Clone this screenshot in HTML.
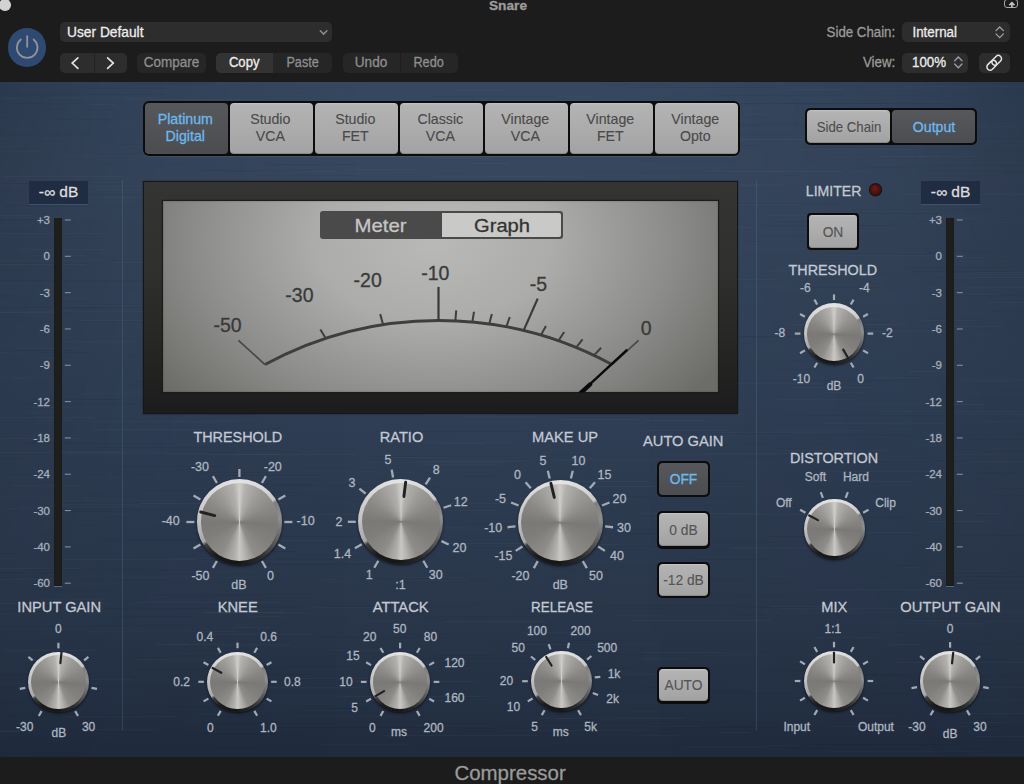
<!DOCTYPE html>
<html><head><meta charset="utf-8"><title>Compressor</title><style>
html,body{margin:0;padding:0;width:1024px;height:784px;overflow:hidden;background:#1c1c1c;font-family:"Liberation Sans", sans-serif;}
#root{position:relative;width:1024px;height:784px;overflow:hidden;}
svg{position:absolute;left:0;top:0;}
text{font-family:"Liberation Sans", sans-serif;}
.kb{position:absolute;border-radius:50%;
 background:conic-gradient(from 0deg,#e4e4e4 0deg,#d6d6d6 40deg,#c6c6c6 57deg,#7e7e7e 61deg,#8e8e8e 85deg,#606060 115deg,#2a2a2a 150deg,#161616 185deg,#1a1a1a 215deg,#3e3e3e 236deg,#a8a8a8 241deg,#c4c4c4 275deg,#dadada 320deg,#e4e4e4 360deg);
 box-shadow:0 1.5px 2.5px rgba(0,0,0,0.6);}
.kf{position:absolute;left:3.8px;top:4px;right:3.8px;bottom:4px;border-radius:50%;
 background:conic-gradient(from 0deg,#cfcdc9 0deg,#b2b0ac 10deg,#9c9a96 35deg,#8a8884 65deg,#7b7977 95deg,#81807d 125deg,#8f8d8a 155deg,#bdbbb7 174deg,#c9c7c3 180deg,#b2b0ac 188deg,#8e8c88 210deg,#7f7d7a 245deg,#7b7977 270deg,#8a8884 300deg,#9c9a96 325deg,#b2b0ac 350deg,#cfcdc9 360deg);}
.ks .kf{left:3px;top:3.3px;right:3px;bottom:3.2px;}
</style></head>
<body><div id="root">
<div style="position:absolute;left:0px;top:0px;width:1024px;height:82px;background:#1c1c1c"></div>
<div style="position:absolute;left:-0.6px;top:-0.8px;width:11.6px;height:11.600000000000001px;background:#d2d2d2;border-radius:50%"></div>
<div style="position:absolute;left:1004.2px;top:-0.6px;width:12.2px;height:7px;border:1.8px solid #a8a8a8;border-radius:3px;"></div>
<div style="position:absolute;left:7.9px;top:28.1px;width:38.6px;height:38.6px;background:#2e4a72;border-radius:50%"></div>
<div style="position:absolute;left:60px;top:22px;width:272px;height:20px;background:#2d2d2d;border-radius:5px"></div>
<div style="position:absolute;left:60px;top:52.5px;width:67px;height:20.0px;background:#2d2d2d;border-radius:5px"></div>
<div style="position:absolute;left:93.5px;top:52.5px;width:1.0px;height:20.0px;background:#222"></div>
<div style="position:absolute;left:137px;top:52.5px;width:69px;height:20.0px;background:#262626;border-radius:5px"></div>
<div style="position:absolute;left:216px;top:52.5px;width:116px;height:20.0px;background:#262626;border-radius:5px"></div>
<div style="position:absolute;left:216px;top:52.5px;width:56.5px;height:20.0px;background:#333333;border-radius:5px 0 0 5px"></div>
<div style="position:absolute;left:342.5px;top:52.5px;width:115.0px;height:20.0px;background:#262626;border-radius:5px"></div>
<div style="position:absolute;left:400px;top:52.5px;width:1px;height:20.0px;background:#1e1e1e"></div>
<div style="position:absolute;left:902px;top:22px;width:107.5px;height:20px;background:#2d2d2d;border-radius:5px"></div>
<div style="position:absolute;left:902px;top:52.5px;width:66px;height:20.0px;background:#2d2d2d;border-radius:5px"></div>
<div style="position:absolute;left:979px;top:52.5px;width:30.5px;height:20.0px;background:#2d2d2d;border-radius:5px"></div>
<div style="position:absolute;left:0px;top:82px;width:1024px;height:675px;background:linear-gradient(180deg,#36475f 0%,#37475e 13%,#2f3e54 50%,#29364a 80%,#243043 92%,#202b3d 100%)"></div>
<div style="position:absolute;left:0px;top:82px;width:1024px;height:675px;background:linear-gradient(90deg,rgba(10,15,25,0.24) 0%,rgba(10,15,25,0.10) 12%,rgba(10,15,25,0) 35%,rgba(10,15,25,0) 62%,rgba(10,15,25,0.10) 88%,rgba(10,15,25,0.24) 100%);-webkit-mask-image:linear-gradient(180deg,#000 0%,rgba(0,0,0,0.45) 45%,rgba(0,0,0,0.15) 100%)"></div>
<svg style="position:absolute;left:0;top:0;filter:blur(0.7px)" width="1024" height="784"><rect x="208" y="414" width="116" height="1" fill="#000" opacity="0.022"/><rect x="92" y="631" width="108" height="1" fill="#000" opacity="0.047"/><rect x="-24" y="302" width="37" height="1" fill="#fff" opacity="0.011"/><rect x="769" y="175" width="30" height="1" fill="#000" opacity="0.024"/><rect x="26" y="311" width="116" height="1" fill="#fff" opacity="0.014"/><rect x="172" y="653" width="89" height="1" fill="#fff" opacity="0.021"/><rect x="531" y="667" width="158" height="1" fill="#000" opacity="0.025"/><rect x="284" y="678" width="110" height="1" fill="#fff" opacity="0.024"/><rect x="22" y="660" width="67" height="1" fill="#fff" opacity="0.021"/><rect x="853" y="404" width="131" height="1" fill="#fff" opacity="0.015"/><rect x="399" y="267" width="35" height="1" fill="#000" opacity="0.036"/><rect x="819" y="434" width="88" height="1" fill="#000" opacity="0.022"/><rect x="756" y="607" width="57" height="1" fill="#000" opacity="0.025"/><rect x="763" y="583" width="25" height="1" fill="#000" opacity="0.022"/><rect x="542" y="654" width="102" height="1" fill="#000" opacity="0.038"/><rect x="834" y="676" width="32" height="1" fill="#000" opacity="0.048"/><rect x="33" y="568" width="30" height="1" fill="#000" opacity="0.029"/><rect x="812" y="674" width="87" height="1" fill="#000" opacity="0.047"/><rect x="-54" y="438" width="133" height="1" fill="#fff" opacity="0.022"/><rect x="20" y="588" width="70" height="1" fill="#000" opacity="0.024"/><rect x="714" y="336" width="115" height="1" fill="#000" opacity="0.035"/><rect x="819" y="253" width="117" height="1" fill="#000" opacity="0.047"/><rect x="470" y="523" width="121" height="1" fill="#000" opacity="0.040"/><rect x="372" y="472" width="53" height="1" fill="#fff" opacity="0.013"/><rect x="-76" y="321" width="139" height="1" fill="#000" opacity="0.025"/><rect x="-92" y="371" width="52" height="1" fill="#fff" opacity="0.017"/><rect x="552" y="662" width="47" height="1" fill="#000" opacity="0.035"/><rect x="10" y="715" width="131" height="1" fill="#000" opacity="0.043"/><rect x="703" y="655" width="116" height="1" fill="#fff" opacity="0.012"/><rect x="720" y="732" width="30" height="1" fill="#fff" opacity="0.030"/><rect x="232" y="534" width="43" height="1" fill="#fff" opacity="0.011"/><rect x="209" y="83" width="152" height="1" fill="#fff" opacity="0.017"/><rect x="44" y="109" width="68" height="1" fill="#000" opacity="0.024"/><rect x="611" y="341" width="108" height="1" fill="#fff" opacity="0.012"/><rect x="854" y="582" width="137" height="1" fill="#fff" opacity="0.012"/><rect x="601" y="187" width="82" height="1" fill="#fff" opacity="0.024"/><rect x="-53" y="611" width="67" height="1" fill="#000" opacity="0.036"/><rect x="-45" y="233" width="150" height="1" fill="#fff" opacity="0.023"/><rect x="434" y="176" width="147" height="1" fill="#fff" opacity="0.013"/><rect x="990" y="311" width="153" height="1" fill="#000" opacity="0.030"/><rect x="299" y="311" width="76" height="1" fill="#000" opacity="0.042"/><rect x="309" y="315" width="147" height="1" fill="#fff" opacity="0.025"/><rect x="472" y="111" width="135" height="1" fill="#fff" opacity="0.024"/><rect x="815" y="435" width="104" height="1" fill="#000" opacity="0.031"/><rect x="109" y="308" width="73" height="1" fill="#fff" opacity="0.017"/><rect x="-97" y="577" width="137" height="1" fill="#000" opacity="0.030"/><rect x="73" y="741" width="45" height="1" fill="#000" opacity="0.043"/><rect x="879" y="287" width="60" height="1" fill="#fff" opacity="0.023"/><rect x="710" y="171" width="133" height="1" fill="#fff" opacity="0.029"/><rect x="248" y="245" width="47" height="1" fill="#fff" opacity="0.022"/><rect x="199" y="559" width="136" height="1" fill="#000" opacity="0.031"/><rect x="168" y="644" width="20" height="1" fill="#fff" opacity="0.029"/><rect x="110" y="748" width="149" height="1" fill="#000" opacity="0.024"/><rect x="332" y="282" width="22" height="1" fill="#fff" opacity="0.016"/><rect x="567" y="329" width="81" height="1" fill="#000" opacity="0.045"/><rect x="624" y="145" width="132" height="1" fill="#000" opacity="0.044"/><rect x="761" y="612" width="143" height="1" fill="#fff" opacity="0.013"/><rect x="-62" y="605" width="127" height="1" fill="#000" opacity="0.038"/><rect x="252" y="236" width="51" height="1" fill="#fff" opacity="0.025"/><rect x="26" y="652" width="98" height="1" fill="#000" opacity="0.036"/><rect x="117" y="577" width="158" height="1" fill="#fff" opacity="0.014"/><rect x="100" y="126" width="144" height="1" fill="#fff" opacity="0.011"/><rect x="807" y="147" width="98" height="1" fill="#000" opacity="0.035"/><rect x="308" y="607" width="85" height="1" fill="#fff" opacity="0.021"/><rect x="939" y="572" width="78" height="1" fill="#000" opacity="0.046"/><rect x="314" y="348" width="129" height="1" fill="#fff" opacity="0.012"/><rect x="547" y="535" width="33" height="1" fill="#000" opacity="0.033"/><rect x="520" y="300" width="46" height="1" fill="#000" opacity="0.025"/><rect x="649" y="741" width="51" height="1" fill="#fff" opacity="0.013"/><rect x="349" y="561" width="39" height="1" fill="#fff" opacity="0.020"/><rect x="230" y="312" width="125" height="1" fill="#000" opacity="0.032"/><rect x="300" y="514" width="106" height="1" fill="#fff" opacity="0.024"/><rect x="592" y="102" width="156" height="1" fill="#fff" opacity="0.024"/><rect x="578" y="476" width="147" height="1" fill="#000" opacity="0.035"/><rect x="131" y="148" width="73" height="1" fill="#000" opacity="0.023"/><rect x="456" y="354" width="25" height="1" fill="#000" opacity="0.025"/><rect x="764" y="215" width="81" height="1" fill="#fff" opacity="0.021"/><rect x="912" y="610" width="98" height="1" fill="#fff" opacity="0.011"/><rect x="771" y="270" width="33" height="1" fill="#fff" opacity="0.010"/><rect x="433" y="173" width="36" height="1" fill="#000" opacity="0.027"/><rect x="149" y="353" width="131" height="1" fill="#fff" opacity="0.030"/><rect x="448" y="510" width="48" height="1" fill="#fff" opacity="0.024"/><rect x="230" y="195" width="82" height="1" fill="#fff" opacity="0.014"/><rect x="524" y="402" width="150" height="1" fill="#000" opacity="0.029"/><rect x="264" y="595" width="84" height="1" fill="#fff" opacity="0.010"/><rect x="-25" y="339" width="18" height="1" fill="#fff" opacity="0.020"/><rect x="953" y="277" width="136" height="1" fill="#fff" opacity="0.019"/><rect x="785" y="748" width="141" height="1" fill="#000" opacity="0.047"/><rect x="530" y="601" width="70" height="1" fill="#000" opacity="0.030"/><rect x="186" y="734" width="118" height="1" fill="#000" opacity="0.049"/><rect x="-71" y="215" width="33" height="1" fill="#000" opacity="0.046"/><rect x="234" y="524" width="29" height="1" fill="#fff" opacity="0.027"/><rect x="477" y="601" width="77" height="1" fill="#000" opacity="0.021"/><rect x="222" y="272" width="83" height="1" fill="#fff" opacity="0.015"/><rect x="562" y="419" width="77" height="1" fill="#fff" opacity="0.028"/><rect x="630" y="306" width="61" height="1" fill="#fff" opacity="0.018"/><rect x="471" y="569" width="143" height="1" fill="#000" opacity="0.027"/><rect x="86" y="88" width="82" height="1" fill="#000" opacity="0.024"/><rect x="-15" y="683" width="115" height="1" fill="#fff" opacity="0.016"/><rect x="73" y="321" width="150" height="1" fill="#000" opacity="0.025"/><rect x="697" y="693" width="98" height="1" fill="#000" opacity="0.035"/><rect x="196" y="373" width="26" height="1" fill="#000" opacity="0.041"/><rect x="779" y="608" width="144" height="1" fill="#fff" opacity="0.020"/><rect x="-68" y="599" width="73" height="1" fill="#fff" opacity="0.011"/><rect x="638" y="735" width="41" height="1" fill="#fff" opacity="0.019"/><rect x="-62" y="134" width="151" height="1" fill="#000" opacity="0.035"/><rect x="835" y="86" width="32" height="1" fill="#000" opacity="0.035"/><rect x="88" y="631" width="149" height="1" fill="#fff" opacity="0.025"/><rect x="52" y="341" width="82" height="1" fill="#fff" opacity="0.025"/><rect x="842" y="319" width="141" height="1" fill="#000" opacity="0.022"/><rect x="-5" y="377" width="65" height="1" fill="#fff" opacity="0.013"/><rect x="523" y="343" width="160" height="1" fill="#fff" opacity="0.020"/><rect x="450" y="580" width="40" height="1" fill="#000" opacity="0.040"/><rect x="957" y="380" width="88" height="1" fill="#fff" opacity="0.019"/><rect x="308" y="204" width="94" height="1" fill="#000" opacity="0.048"/><rect x="493" y="100" width="132" height="1" fill="#fff" opacity="0.020"/><rect x="450" y="543" width="114" height="1" fill="#fff" opacity="0.029"/><rect x="52" y="298" width="38" height="1" fill="#fff" opacity="0.020"/><rect x="171" y="451" width="145" height="1" fill="#fff" opacity="0.012"/><rect x="373" y="456" width="142" height="1" fill="#000" opacity="0.035"/><rect x="225" y="108" width="15" height="1" fill="#000" opacity="0.040"/><rect x="518" y="498" width="51" height="1" fill="#fff" opacity="0.018"/><rect x="578" y="206" width="15" height="1" fill="#fff" opacity="0.017"/><rect x="145" y="490" width="65" height="1" fill="#000" opacity="0.047"/><rect x="418" y="379" width="110" height="1" fill="#fff" opacity="0.018"/><rect x="56" y="686" width="107" height="1" fill="#000" opacity="0.043"/><rect x="474" y="132" width="41" height="1" fill="#fff" opacity="0.023"/><rect x="204" y="733" width="78" height="1" fill="#000" opacity="0.033"/><rect x="288" y="406" width="110" height="1" fill="#000" opacity="0.033"/><rect x="719" y="112" width="156" height="1" fill="#000" opacity="0.042"/><rect x="741" y="133" width="130" height="1" fill="#000" opacity="0.024"/><rect x="894" y="376" width="27" height="1" fill="#000" opacity="0.037"/><rect x="867" y="257" width="121" height="1" fill="#fff" opacity="0.016"/><rect x="432" y="751" width="118" height="1" fill="#000" opacity="0.029"/><rect x="707" y="653" width="45" height="1" fill="#fff" opacity="0.013"/><rect x="925" y="295" width="142" height="1" fill="#000" opacity="0.034"/><rect x="821" y="423" width="124" height="1" fill="#fff" opacity="0.014"/><rect x="257" y="175" width="102" height="1" fill="#000" opacity="0.030"/><rect x="429" y="460" width="160" height="1" fill="#fff" opacity="0.010"/><rect x="684" y="505" width="120" height="1" fill="#000" opacity="0.026"/><rect x="592" y="359" width="30" height="1" fill="#fff" opacity="0.021"/><rect x="157" y="451" width="143" height="1" fill="#000" opacity="0.044"/><rect x="89" y="304" width="84" height="1" fill="#000" opacity="0.032"/><rect x="813" y="744" width="125" height="1" fill="#000" opacity="0.045"/><rect x="160" y="105" width="23" height="1" fill="#fff" opacity="0.025"/><rect x="903" y="567" width="15" height="1" fill="#fff" opacity="0.029"/><rect x="858" y="623" width="129" height="1" fill="#fff" opacity="0.012"/><rect x="211" y="241" width="148" height="1" fill="#000" opacity="0.023"/><rect x="836" y="745" width="36" height="1" fill="#000" opacity="0.021"/><rect x="376" y="211" width="160" height="1" fill="#000" opacity="0.039"/><rect x="162" y="394" width="79" height="1" fill="#000" opacity="0.033"/><rect x="103" y="197" width="33" height="1" fill="#fff" opacity="0.029"/><rect x="694" y="279" width="81" height="1" fill="#fff" opacity="0.022"/><rect x="1000" y="93" width="92" height="1" fill="#000" opacity="0.028"/><rect x="396" y="406" width="136" height="1" fill="#000" opacity="0.036"/><rect x="743" y="112" width="93" height="1" fill="#fff" opacity="0.014"/><rect x="760" y="745" width="35" height="1" fill="#fff" opacity="0.023"/><rect x="364" y="462" width="141" height="1" fill="#fff" opacity="0.017"/><rect x="642" y="513" width="116" height="1" fill="#fff" opacity="0.026"/><rect x="38" y="599" width="67" height="1" fill="#fff" opacity="0.014"/><rect x="372" y="281" width="134" height="1" fill="#fff" opacity="0.025"/><rect x="123" y="385" width="141" height="1" fill="#000" opacity="0.047"/><rect x="754" y="579" width="29" height="1" fill="#000" opacity="0.024"/><rect x="11" y="485" width="69" height="1" fill="#fff" opacity="0.022"/><rect x="6" y="508" width="30" height="1" fill="#fff" opacity="0.019"/><rect x="131" y="404" width="35" height="1" fill="#000" opacity="0.030"/><rect x="974" y="272" width="134" height="1" fill="#fff" opacity="0.023"/><rect x="665" y="470" width="99" height="1" fill="#fff" opacity="0.012"/><rect x="473" y="163" width="35" height="1" fill="#fff" opacity="0.029"/><rect x="324" y="209" width="112" height="1" fill="#fff" opacity="0.026"/><rect x="79" y="525" width="27" height="1" fill="#000" opacity="0.026"/><rect x="814" y="637" width="64" height="1" fill="#fff" opacity="0.025"/><rect x="-38" y="568" width="120" height="1" fill="#fff" opacity="0.023"/><rect x="-17" y="497" width="111" height="1" fill="#fff" opacity="0.011"/><rect x="426" y="146" width="64" height="1" fill="#000" opacity="0.047"/><rect x="643" y="430" width="84" height="1" fill="#fff" opacity="0.029"/><rect x="436" y="127" width="96" height="1" fill="#000" opacity="0.029"/><rect x="33" y="692" width="21" height="1" fill="#000" opacity="0.023"/><rect x="691" y="559" width="79" height="1" fill="#000" opacity="0.044"/><rect x="916" y="218" width="61" height="1" fill="#fff" opacity="0.029"/><rect x="209" y="393" width="75" height="1" fill="#fff" opacity="0.016"/><rect x="61" y="453" width="146" height="1" fill="#fff" opacity="0.025"/><rect x="735" y="336" width="31" height="1" fill="#000" opacity="0.034"/><rect x="567" y="640" width="56" height="1" fill="#000" opacity="0.047"/><rect x="442" y="156" width="36" height="1" fill="#fff" opacity="0.018"/><rect x="254" y="540" width="74" height="1" fill="#fff" opacity="0.019"/><rect x="148" y="323" width="90" height="1" fill="#fff" opacity="0.021"/><rect x="420" y="464" width="81" height="1" fill="#fff" opacity="0.015"/><rect x="382" y="334" width="54" height="1" fill="#fff" opacity="0.028"/><rect x="568" y="275" width="31" height="1" fill="#fff" opacity="0.030"/><rect x="977" y="602" width="74" height="1" fill="#000" opacity="0.023"/><rect x="-25" y="558" width="41" height="1" fill="#fff" opacity="0.028"/><rect x="818" y="319" width="110" height="1" fill="#fff" opacity="0.016"/><rect x="3" y="205" width="63" height="1" fill="#000" opacity="0.045"/><rect x="53" y="281" width="110" height="1" fill="#000" opacity="0.025"/><rect x="432" y="700" width="16" height="1" fill="#fff" opacity="0.022"/><rect x="616" y="717" width="70" height="1" fill="#fff" opacity="0.017"/><rect x="317" y="128" width="80" height="1" fill="#fff" opacity="0.025"/><rect x="-77" y="291" width="98" height="1" fill="#fff" opacity="0.017"/><rect x="539" y="718" width="34" height="1" fill="#fff" opacity="0.026"/><rect x="890" y="644" width="31" height="1" fill="#fff" opacity="0.026"/><rect x="216" y="646" width="151" height="1" fill="#fff" opacity="0.013"/><rect x="739" y="360" width="87" height="1" fill="#000" opacity="0.033"/><rect x="539" y="135" width="160" height="1" fill="#000" opacity="0.032"/><rect x="645" y="101" width="65" height="1" fill="#fff" opacity="0.018"/><rect x="789" y="89" width="55" height="1" fill="#fff" opacity="0.026"/><rect x="646" y="498" width="132" height="1" fill="#000" opacity="0.024"/><rect x="191" y="135" width="116" height="1" fill="#fff" opacity="0.022"/><rect x="933" y="462" width="58" height="1" fill="#fff" opacity="0.016"/><rect x="251" y="616" width="32" height="1" fill="#fff" opacity="0.020"/><rect x="517" y="285" width="47" height="1" fill="#000" opacity="0.021"/><rect x="544" y="577" width="28" height="1" fill="#000" opacity="0.039"/><rect x="228" y="171" width="71" height="1" fill="#000" opacity="0.038"/><rect x="868" y="283" width="61" height="1" fill="#000" opacity="0.021"/><rect x="220" y="613" width="113" height="1" fill="#fff" opacity="0.013"/><rect x="-16" y="280" width="158" height="1" fill="#000" opacity="0.040"/><rect x="141" y="414" width="114" height="1" fill="#000" opacity="0.037"/><rect x="527" y="725" width="122" height="1" fill="#fff" opacity="0.015"/><rect x="652" y="481" width="129" height="1" fill="#000" opacity="0.025"/><rect x="902" y="86" width="134" height="1" fill="#fff" opacity="0.025"/><rect x="267" y="552" width="136" height="1" fill="#fff" opacity="0.011"/><rect x="781" y="450" width="108" height="1" fill="#fff" opacity="0.019"/><rect x="-17" y="605" width="25" height="1" fill="#000" opacity="0.022"/><rect x="947" y="404" width="35" height="1" fill="#fff" opacity="0.020"/><rect x="178" y="469" width="21" height="1" fill="#000" opacity="0.050"/><rect x="296" y="195" width="48" height="1" fill="#000" opacity="0.035"/><rect x="352" y="252" width="31" height="1" fill="#000" opacity="0.038"/><rect x="225" y="341" width="97" height="1" fill="#000" opacity="0.028"/><rect x="194" y="550" width="80" height="1" fill="#000" opacity="0.048"/><rect x="438" y="296" width="144" height="1" fill="#fff" opacity="0.017"/><rect x="272" y="286" width="118" height="1" fill="#fff" opacity="0.029"/><rect x="671" y="418" width="58" height="1" fill="#000" opacity="0.028"/><rect x="-1" y="626" width="107" height="1" fill="#000" opacity="0.034"/><rect x="114" y="616" width="79" height="1" fill="#000" opacity="0.039"/><rect x="660" y="486" width="82" height="1" fill="#fff" opacity="0.017"/><rect x="637" y="232" width="99" height="1" fill="#000" opacity="0.033"/><rect x="-2" y="263" width="90" height="1" fill="#000" opacity="0.028"/><rect x="540" y="737" width="15" height="1" fill="#000" opacity="0.027"/><rect x="785" y="380" width="121" height="1" fill="#000" opacity="0.047"/><rect x="900" y="218" width="73" height="1" fill="#000" opacity="0.021"/><rect x="-95" y="138" width="160" height="1" fill="#fff" opacity="0.012"/><rect x="993" y="448" width="72" height="1" fill="#fff" opacity="0.016"/><rect x="318" y="219" width="108" height="1" fill="#000" opacity="0.034"/><rect x="-72" y="220" width="77" height="1" fill="#000" opacity="0.034"/><rect x="196" y="148" width="84" height="1" fill="#fff" opacity="0.015"/><rect x="14" y="94" width="158" height="1" fill="#000" opacity="0.038"/><rect x="808" y="675" width="147" height="1" fill="#000" opacity="0.027"/><rect x="-10" y="83" width="30" height="1" fill="#000" opacity="0.032"/><rect x="226" y="326" width="29" height="1" fill="#000" opacity="0.023"/><rect x="303" y="710" width="51" height="1" fill="#fff" opacity="0.020"/><rect x="938" y="741" width="121" height="1" fill="#000" opacity="0.025"/><rect x="30" y="399" width="91" height="1" fill="#000" opacity="0.050"/><rect x="-87" y="572" width="111" height="1" fill="#000" opacity="0.042"/><rect x="64" y="559" width="130" height="1" fill="#fff" opacity="0.030"/><rect x="375" y="350" width="24" height="1" fill="#fff" opacity="0.028"/><rect x="7" y="352" width="83" height="1" fill="#000" opacity="0.040"/><rect x="443" y="618" width="90" height="1" fill="#000" opacity="0.049"/><rect x="74" y="305" width="144" height="1" fill="#fff" opacity="0.015"/><rect x="315" y="324" width="55" height="1" fill="#000" opacity="0.030"/><rect x="572" y="481" width="76" height="1" fill="#fff" opacity="0.027"/><rect x="861" y="632" width="135" height="1" fill="#000" opacity="0.041"/><rect x="795" y="110" width="74" height="1" fill="#000" opacity="0.029"/><rect x="701" y="300" width="34" height="1" fill="#000" opacity="0.025"/><rect x="-45" y="116" width="43" height="1" fill="#fff" opacity="0.029"/><rect x="190" y="436" width="22" height="1" fill="#fff" opacity="0.013"/><rect x="-13" y="741" width="32" height="1" fill="#000" opacity="0.022"/><rect x="644" y="687" width="66" height="1" fill="#000" opacity="0.045"/><rect x="686" y="150" width="42" height="1" fill="#fff" opacity="0.014"/><rect x="-30" y="117" width="37" height="1" fill="#000" opacity="0.039"/><rect x="877" y="377" width="40" height="1" fill="#fff" opacity="0.026"/><rect x="319" y="744" width="90" height="1" fill="#fff" opacity="0.018"/><rect x="618" y="104" width="80" height="1" fill="#000" opacity="0.021"/><rect x="557" y="459" width="143" height="1" fill="#fff" opacity="0.016"/><rect x="745" y="114" width="22" height="1" fill="#fff" opacity="0.025"/><rect x="860" y="438" width="27" height="1" fill="#000" opacity="0.026"/><rect x="488" y="176" width="58" height="1" fill="#fff" opacity="0.020"/><rect x="10" y="378" width="16" height="1" fill="#fff" opacity="0.012"/><rect x="912" y="271" width="103" height="1" fill="#000" opacity="0.035"/><rect x="225" y="674" width="87" height="1" fill="#000" opacity="0.048"/><rect x="920" y="320" width="57" height="1" fill="#fff" opacity="0.023"/><rect x="904" y="165" width="158" height="1" fill="#000" opacity="0.039"/><rect x="94" y="447" width="117" height="1" fill="#000" opacity="0.047"/><rect x="764" y="171" width="21" height="1" fill="#fff" opacity="0.016"/><rect x="926" y="521" width="58" height="1" fill="#fff" opacity="0.028"/><rect x="843" y="322" width="47" height="1" fill="#000" opacity="0.043"/><rect x="-31" y="702" width="104" height="1" fill="#000" opacity="0.036"/><rect x="562" y="544" width="58" height="1" fill="#fff" opacity="0.024"/><rect x="373" y="346" width="47" height="1" fill="#fff" opacity="0.023"/><rect x="939" y="326" width="64" height="1" fill="#fff" opacity="0.025"/><rect x="216" y="715" width="54" height="1" fill="#000" opacity="0.042"/><rect x="969" y="700" width="104" height="1" fill="#fff" opacity="0.017"/><rect x="429" y="276" width="41" height="1" fill="#fff" opacity="0.023"/><rect x="686" y="283" width="53" height="1" fill="#000" opacity="0.044"/><rect x="790" y="387" width="85" height="1" fill="#fff" opacity="0.023"/><rect x="475" y="192" width="67" height="1" fill="#000" opacity="0.034"/><rect x="717" y="95" width="126" height="1" fill="#000" opacity="0.035"/><rect x="506" y="730" width="133" height="1" fill="#fff" opacity="0.015"/><rect x="-89" y="497" width="77" height="1" fill="#000" opacity="0.033"/><rect x="762" y="670" width="73" height="1" fill="#000" opacity="0.040"/><rect x="368" y="740" width="61" height="1" fill="#000" opacity="0.034"/><rect x="432" y="403" width="40" height="1" fill="#000" opacity="0.027"/><rect x="220" y="492" width="79" height="1" fill="#000" opacity="0.034"/><rect x="738" y="103" width="147" height="1" fill="#000" opacity="0.048"/><rect x="571" y="270" width="17" height="1" fill="#fff" opacity="0.020"/><rect x="-22" y="191" width="79" height="1" fill="#000" opacity="0.025"/><rect x="963" y="287" width="104" height="1" fill="#fff" opacity="0.021"/><rect x="319" y="637" width="136" height="1" fill="#000" opacity="0.039"/><rect x="968" y="461" width="102" height="1" fill="#fff" opacity="0.029"/><rect x="276" y="298" width="115" height="1" fill="#000" opacity="0.048"/><rect x="628" y="711" width="29" height="1" fill="#fff" opacity="0.018"/><rect x="-73" y="145" width="34" height="1" fill="#fff" opacity="0.018"/><rect x="443" y="443" width="42" height="1" fill="#fff" opacity="0.025"/><rect x="348" y="622" width="115" height="1" fill="#fff" opacity="0.013"/><rect x="295" y="153" width="135" height="1" fill="#000" opacity="0.042"/><rect x="623" y="232" width="120" height="1" fill="#fff" opacity="0.016"/><rect x="156" y="644" width="135" height="1" fill="#fff" opacity="0.027"/><rect x="670" y="356" width="79" height="1" fill="#000" opacity="0.040"/><rect x="-95" y="576" width="86" height="1" fill="#fff" opacity="0.023"/><rect x="882" y="411" width="139" height="1" fill="#fff" opacity="0.023"/><rect x="212" y="454" width="92" height="1" fill="#000" opacity="0.022"/><rect x="564" y="661" width="50" height="1" fill="#000" opacity="0.030"/><rect x="-70" y="679" width="17" height="1" fill="#fff" opacity="0.011"/><rect x="412" y="383" width="40" height="1" fill="#000" opacity="0.046"/><rect x="825" y="273" width="103" height="1" fill="#000" opacity="0.026"/><rect x="994" y="495" width="57" height="1" fill="#000" opacity="0.041"/><rect x="508" y="175" width="65" height="1" fill="#fff" opacity="0.014"/><rect x="798" y="163" width="44" height="1" fill="#000" opacity="0.028"/><rect x="185" y="322" width="136" height="1" fill="#fff" opacity="0.011"/><rect x="195" y="561" width="140" height="1" fill="#fff" opacity="0.013"/><rect x="-87" y="696" width="56" height="1" fill="#000" opacity="0.034"/><rect x="919" y="659" width="90" height="1" fill="#000" opacity="0.031"/><rect x="54" y="511" width="61" height="1" fill="#000" opacity="0.039"/><rect x="-58" y="112" width="26" height="1" fill="#000" opacity="0.048"/><rect x="92" y="421" width="145" height="1" fill="#fff" opacity="0.025"/><rect x="-31" y="230" width="69" height="1" fill="#000" opacity="0.039"/><rect x="93" y="429" width="108" height="1" fill="#fff" opacity="0.026"/><rect x="331" y="650" width="87" height="1" fill="#fff" opacity="0.018"/><rect x="7" y="650" width="89" height="1" fill="#fff" opacity="0.027"/><rect x="583" y="496" width="143" height="1" fill="#000" opacity="0.046"/><rect x="316" y="436" width="141" height="1" fill="#000" opacity="0.030"/><rect x="512" y="407" width="47" height="1" fill="#000" opacity="0.039"/><rect x="716" y="124" width="156" height="1" fill="#000" opacity="0.036"/><rect x="716" y="133" width="91" height="1" fill="#fff" opacity="0.011"/><rect x="23" y="569" width="143" height="1" fill="#000" opacity="0.038"/><rect x="201" y="714" width="36" height="1" fill="#fff" opacity="0.023"/><rect x="256" y="551" width="40" height="1" fill="#000" opacity="0.046"/><rect x="106" y="514" width="18" height="1" fill="#fff" opacity="0.026"/><rect x="428" y="399" width="92" height="1" fill="#fff" opacity="0.011"/><rect x="782" y="103" width="159" height="1" fill="#000" opacity="0.048"/><rect x="919" y="138" width="160" height="1" fill="#000" opacity="0.045"/><rect x="728" y="514" width="129" height="1" fill="#fff" opacity="0.024"/><rect x="218" y="691" width="136" height="1" fill="#000" opacity="0.036"/><rect x="867" y="167" width="69" height="1" fill="#000" opacity="0.039"/><rect x="-91" y="520" width="17" height="1" fill="#000" opacity="0.024"/><rect x="346" y="173" width="46" height="1" fill="#fff" opacity="0.010"/><rect x="396" y="665" width="130" height="1" fill="#000" opacity="0.026"/><rect x="649" y="134" width="52" height="1" fill="#000" opacity="0.023"/><rect x="920" y="726" width="132" height="1" fill="#000" opacity="0.047"/><rect x="-35" y="136" width="17" height="1" fill="#fff" opacity="0.028"/><rect x="63" y="716" width="114" height="1" fill="#fff" opacity="0.025"/><rect x="896" y="252" width="30" height="1" fill="#fff" opacity="0.029"/><rect x="862" y="532" width="57" height="1" fill="#fff" opacity="0.026"/><rect x="235" y="454" width="121" height="1" fill="#fff" opacity="0.026"/><rect x="457" y="546" width="160" height="1" fill="#fff" opacity="0.016"/><rect x="580" y="719" width="18" height="1" fill="#000" opacity="0.038"/><rect x="777" y="399" width="78" height="1" fill="#fff" opacity="0.024"/><rect x="379" y="699" width="130" height="1" fill="#fff" opacity="0.010"/><rect x="448" y="352" width="123" height="1" fill="#fff" opacity="0.028"/><rect x="490" y="126" width="51" height="1" fill="#000" opacity="0.046"/><rect x="201" y="668" width="85" height="1" fill="#000" opacity="0.044"/><rect x="923" y="643" width="103" height="1" fill="#000" opacity="0.036"/><rect x="681" y="579" width="66" height="1" fill="#000" opacity="0.042"/><rect x="533" y="322" width="29" height="1" fill="#000" opacity="0.034"/><rect x="421" y="294" width="17" height="1" fill="#000" opacity="0.034"/><rect x="998" y="172" width="105" height="1" fill="#000" opacity="0.027"/><rect x="967" y="676" width="81" height="1" fill="#000" opacity="0.036"/><rect x="936" y="571" width="66" height="1" fill="#fff" opacity="0.014"/><rect x="493" y="268" width="107" height="1" fill="#000" opacity="0.031"/><rect x="205" y="612" width="78" height="1" fill="#fff" opacity="0.030"/><rect x="117" y="466" width="110" height="1" fill="#000" opacity="0.044"/><rect x="546" y="242" width="22" height="1" fill="#fff" opacity="0.020"/><rect x="92" y="104" width="23" height="1" fill="#fff" opacity="0.027"/><rect x="895" y="662" width="160" height="1" fill="#fff" opacity="0.029"/><rect x="772" y="369" width="39" height="1" fill="#000" opacity="0.043"/><rect x="168" y="706" width="80" height="1" fill="#000" opacity="0.030"/><rect x="674" y="268" width="36" height="1" fill="#fff" opacity="0.011"/><rect x="838" y="461" width="139" height="1" fill="#000" opacity="0.047"/><rect x="713" y="148" width="45" height="1" fill="#000" opacity="0.023"/><rect x="377" y="409" width="37" height="1" fill="#000" opacity="0.040"/><rect x="274" y="485" width="129" height="1" fill="#000" opacity="0.031"/><rect x="354" y="323" width="59" height="1" fill="#fff" opacity="0.015"/><rect x="21" y="443" width="156" height="1" fill="#000" opacity="0.045"/><rect x="428" y="131" width="146" height="1" fill="#000" opacity="0.039"/><rect x="14" y="578" width="40" height="1" fill="#fff" opacity="0.025"/><rect x="511" y="286" width="127" height="1" fill="#000" opacity="0.023"/><rect x="661" y="414" width="80" height="1" fill="#fff" opacity="0.017"/><rect x="245" y="471" width="127" height="1" fill="#fff" opacity="0.013"/><rect x="858" y="95" width="64" height="1" fill="#000" opacity="0.025"/><rect x="59" y="308" width="110" height="1" fill="#000" opacity="0.024"/><rect x="98" y="540" width="113" height="1" fill="#000" opacity="0.039"/><rect x="595" y="546" width="97" height="1" fill="#000" opacity="0.034"/><rect x="649" y="726" width="51" height="1" fill="#fff" opacity="0.025"/><rect x="824" y="267" width="156" height="1" fill="#000" opacity="0.033"/><rect x="445" y="235" width="122" height="1" fill="#fff" opacity="0.013"/><rect x="507" y="360" width="100" height="1" fill="#000" opacity="0.028"/><rect x="551" y="194" width="131" height="1" fill="#000" opacity="0.023"/><rect x="16" y="608" width="69" height="1" fill="#000" opacity="0.045"/><rect x="427" y="205" width="66" height="1" fill="#000" opacity="0.033"/><rect x="388" y="350" width="75" height="1" fill="#fff" opacity="0.016"/><rect x="17" y="249" width="90" height="1" fill="#fff" opacity="0.023"/><rect x="939" y="535" width="102" height="1" fill="#000" opacity="0.033"/><rect x="486" y="622" width="62" height="1" fill="#fff" opacity="0.011"/><rect x="347" y="501" width="85" height="1" fill="#000" opacity="0.024"/><rect x="968" y="267" width="73" height="1" fill="#000" opacity="0.026"/><rect x="79" y="164" width="141" height="1" fill="#000" opacity="0.025"/><rect x="293" y="223" width="93" height="1" fill="#fff" opacity="0.011"/><rect x="735" y="615" width="29" height="1" fill="#000" opacity="0.030"/><rect x="909" y="371" width="38" height="1" fill="#fff" opacity="0.028"/><rect x="172" y="571" width="83" height="1" fill="#fff" opacity="0.021"/><rect x="-25" y="458" width="56" height="1" fill="#000" opacity="0.037"/><rect x="629" y="87" width="148" height="1" fill="#000" opacity="0.049"/><rect x="147" y="156" width="106" height="1" fill="#000" opacity="0.044"/><rect x="681" y="411" width="30" height="1" fill="#fff" opacity="0.012"/><rect x="814" y="589" width="146" height="1" fill="#fff" opacity="0.026"/><rect x="-58" y="220" width="77" height="1" fill="#000" opacity="0.027"/><rect x="243" y="269" width="41" height="1" fill="#fff" opacity="0.021"/><rect x="-61" y="113" width="39" height="1" fill="#000" opacity="0.042"/><rect x="-64" y="350" width="133" height="1" fill="#000" opacity="0.041"/><rect x="618" y="188" width="39" height="1" fill="#000" opacity="0.021"/><rect x="852" y="209" width="141" height="1" fill="#000" opacity="0.043"/><rect x="149" y="195" width="46" height="1" fill="#fff" opacity="0.013"/><rect x="365" y="689" width="73" height="1" fill="#fff" opacity="0.021"/><rect x="236" y="489" width="19" height="1" fill="#000" opacity="0.032"/><rect x="976" y="513" width="24" height="1" fill="#fff" opacity="0.029"/><rect x="593" y="454" width="117" height="1" fill="#fff" opacity="0.017"/><rect x="556" y="529" width="117" height="1" fill="#000" opacity="0.022"/><rect x="200" y="612" width="105" height="1" fill="#fff" opacity="0.018"/><rect x="-77" y="730" width="108" height="1" fill="#fff" opacity="0.014"/><rect x="786" y="415" width="66" height="1" fill="#000" opacity="0.021"/><rect x="761" y="225" width="116" height="1" fill="#000" opacity="0.048"/><rect x="-5" y="731" width="25" height="1" fill="#fff" opacity="0.023"/><rect x="459" y="355" width="153" height="1" fill="#000" opacity="0.021"/><rect x="413" y="185" width="46" height="1" fill="#000" opacity="0.033"/><rect x="488" y="123" width="43" height="1" fill="#fff" opacity="0.023"/><rect x="23" y="206" width="146" height="1" fill="#000" opacity="0.023"/><rect x="993" y="687" width="52" height="1" fill="#fff" opacity="0.020"/><rect x="732" y="383" width="88" height="1" fill="#fff" opacity="0.025"/><rect x="488" y="642" width="131" height="1" fill="#000" opacity="0.037"/><rect x="691" y="748" width="66" height="1" fill="#000" opacity="0.031"/><rect x="521" y="644" width="137" height="1" fill="#fff" opacity="0.016"/><rect x="583" y="331" width="71" height="1" fill="#fff" opacity="0.021"/><rect x="711" y="682" width="18" height="1" fill="#000" opacity="0.025"/><rect x="563" y="327" width="157" height="1" fill="#fff" opacity="0.015"/><rect x="505" y="304" width="29" height="1" fill="#000" opacity="0.025"/><rect x="612" y="151" width="127" height="1" fill="#000" opacity="0.036"/><rect x="625" y="533" width="42" height="1" fill="#000" opacity="0.050"/><rect x="753" y="241" width="101" height="1" fill="#000" opacity="0.024"/><rect x="466" y="290" width="147" height="1" fill="#fff" opacity="0.027"/><rect x="450" y="569" width="47" height="1" fill="#fff" opacity="0.012"/><rect x="140" y="503" width="142" height="1" fill="#fff" opacity="0.030"/><rect x="755" y="236" width="86" height="1" fill="#000" opacity="0.038"/><rect x="826" y="471" width="132" height="1" fill="#fff" opacity="0.017"/><rect x="700" y="444" width="149" height="1" fill="#000" opacity="0.032"/><rect x="-87" y="412" width="142" height="1" fill="#fff" opacity="0.016"/><rect x="522" y="632" width="52" height="1" fill="#fff" opacity="0.018"/><rect x="80" y="320" width="99" height="1" fill="#fff" opacity="0.027"/><rect x="567" y="331" width="67" height="1" fill="#000" opacity="0.047"/><rect x="-48" y="93" width="27" height="1" fill="#fff" opacity="0.028"/><rect x="998" y="390" width="94" height="1" fill="#000" opacity="0.050"/><rect x="959" y="612" width="125" height="1" fill="#fff" opacity="0.017"/><rect x="619" y="691" width="130" height="1" fill="#000" opacity="0.040"/><rect x="369" y="620" width="40" height="1" fill="#fff" opacity="0.020"/><rect x="215" y="747" width="63" height="1" fill="#000" opacity="0.035"/><rect x="603" y="533" width="150" height="1" fill="#000" opacity="0.023"/><rect x="551" y="454" width="108" height="1" fill="#000" opacity="0.045"/><rect x="259" y="607" width="43" height="1" fill="#000" opacity="0.029"/><rect x="942" y="434" width="122" height="1" fill="#000" opacity="0.036"/><rect x="325" y="606" width="144" height="1" fill="#000" opacity="0.032"/><rect x="118" y="144" width="105" height="1" fill="#000" opacity="0.039"/><rect x="742" y="126" width="17" height="1" fill="#000" opacity="0.029"/><rect x="-92" y="649" width="92" height="1" fill="#fff" opacity="0.012"/><rect x="-40" y="98" width="65" height="1" fill="#fff" opacity="0.025"/><rect x="444" y="663" width="151" height="1" fill="#000" opacity="0.024"/><rect x="741" y="286" width="46" height="1" fill="#fff" opacity="0.020"/><rect x="118" y="604" width="22" height="1" fill="#fff" opacity="0.013"/><rect x="904" y="618" width="134" height="1" fill="#000" opacity="0.044"/><rect x="-75" y="146" width="97" height="1" fill="#fff" opacity="0.015"/><rect x="246" y="365" width="23" height="1" fill="#fff" opacity="0.012"/><rect x="29" y="679" width="104" height="1" fill="#fff" opacity="0.022"/><rect x="11" y="103" width="71" height="1" fill="#000" opacity="0.037"/><rect x="800" y="127" width="28" height="1" fill="#000" opacity="0.027"/><rect x="226" y="128" width="59" height="1" fill="#fff" opacity="0.028"/><rect x="521" y="549" width="122" height="1" fill="#000" opacity="0.049"/><rect x="38" y="590" width="77" height="1" fill="#000" opacity="0.040"/><rect x="353" y="681" width="120" height="1" fill="#fff" opacity="0.028"/><rect x="-55" y="579" width="77" height="1" fill="#fff" opacity="0.013"/><rect x="282" y="471" width="16" height="1" fill="#000" opacity="0.029"/><rect x="643" y="658" width="44" height="1" fill="#fff" opacity="0.027"/><rect x="725" y="426" width="31" height="1" fill="#000" opacity="0.033"/><rect x="401" y="442" width="114" height="1" fill="#fff" opacity="0.016"/><rect x="792" y="325" width="23" height="1" fill="#fff" opacity="0.011"/><rect x="395" y="242" width="48" height="1" fill="#fff" opacity="0.015"/><rect x="807" y="213" width="134" height="1" fill="#000" opacity="0.044"/><rect x="653" y="246" width="105" height="1" fill="#fff" opacity="0.018"/><rect x="326" y="727" width="91" height="1" fill="#000" opacity="0.035"/><rect x="827" y="315" width="48" height="1" fill="#000" opacity="0.050"/><rect x="801" y="693" width="109" height="1" fill="#000" opacity="0.032"/><rect x="335" y="605" width="47" height="1" fill="#000" opacity="0.024"/><rect x="87" y="608" width="153" height="1" fill="#000" opacity="0.042"/><rect x="-42" y="477" width="160" height="1" fill="#fff" opacity="0.010"/><rect x="262" y="171" width="74" height="1" fill="#fff" opacity="0.023"/><rect x="39" y="194" width="158" height="1" fill="#000" opacity="0.044"/><rect x="294" y="387" width="31" height="1" fill="#000" opacity="0.023"/><rect x="158" y="378" width="117" height="1" fill="#fff" opacity="0.018"/><rect x="170" y="558" width="85" height="1" fill="#fff" opacity="0.017"/><rect x="744" y="442" width="21" height="1" fill="#000" opacity="0.041"/><rect x="720" y="337" width="105" height="1" fill="#000" opacity="0.023"/><rect x="135" y="381" width="84" height="1" fill="#000" opacity="0.042"/><rect x="728" y="124" width="25" height="1" fill="#000" opacity="0.033"/><rect x="219" y="393" width="112" height="1" fill="#000" opacity="0.037"/><rect x="267" y="727" width="159" height="1" fill="#000" opacity="0.037"/><rect x="421" y="616" width="126" height="1" fill="#000" opacity="0.037"/><rect x="129" y="83" width="88" height="1" fill="#000" opacity="0.046"/><rect x="-4" y="682" width="77" height="1" fill="#000" opacity="0.021"/><rect x="330" y="409" width="103" height="1" fill="#000" opacity="0.023"/><rect x="352" y="486" width="86" height="1" fill="#000" opacity="0.030"/><rect x="806" y="517" width="102" height="1" fill="#000" opacity="0.042"/><rect x="827" y="726" width="145" height="1" fill="#fff" opacity="0.024"/><rect x="948" y="521" width="47" height="1" fill="#fff" opacity="0.014"/><rect x="434" y="655" width="59" height="1" fill="#000" opacity="0.049"/><rect x="383" y="735" width="154" height="1" fill="#fff" opacity="0.029"/><rect x="632" y="255" width="103" height="1" fill="#fff" opacity="0.014"/><rect x="180" y="401" width="49" height="1" fill="#000" opacity="0.035"/><rect x="387" y="577" width="76" height="1" fill="#fff" opacity="0.024"/><rect x="619" y="219" width="91" height="1" fill="#fff" opacity="0.024"/><rect x="393" y="684" width="100" height="1" fill="#000" opacity="0.024"/><rect x="246" y="517" width="54" height="1" fill="#000" opacity="0.034"/><rect x="322" y="498" width="44" height="1" fill="#000" opacity="0.020"/><rect x="322" y="581" width="26" height="1" fill="#fff" opacity="0.016"/><rect x="126" y="284" width="94" height="1" fill="#fff" opacity="0.012"/><rect x="811" y="415" width="134" height="1" fill="#000" opacity="0.029"/><rect x="47" y="653" width="26" height="1" fill="#fff" opacity="0.030"/><rect x="71" y="580" width="99" height="1" fill="#000" opacity="0.037"/><rect x="901" y="194" width="126" height="1" fill="#fff" opacity="0.026"/><rect x="-83" y="412" width="106" height="1" fill="#000" opacity="0.039"/><rect x="414" y="725" width="77" height="1" fill="#fff" opacity="0.025"/><rect x="709" y="108" width="52" height="1" fill="#fff" opacity="0.014"/><rect x="976" y="736" width="58" height="1" fill="#fff" opacity="0.024"/><rect x="569" y="400" width="112" height="1" fill="#fff" opacity="0.027"/><rect x="371" y="410" width="109" height="1" fill="#fff" opacity="0.028"/><rect x="390" y="342" width="29" height="1" fill="#fff" opacity="0.021"/><rect x="725" y="726" width="27" height="1" fill="#000" opacity="0.035"/><rect x="222" y="594" width="91" height="1" fill="#000" opacity="0.039"/><rect x="365" y="228" width="56" height="1" fill="#fff" opacity="0.023"/><rect x="83" y="494" width="25" height="1" fill="#000" opacity="0.034"/><rect x="662" y="306" width="15" height="1" fill="#fff" opacity="0.022"/><rect x="771" y="606" width="51" height="1" fill="#fff" opacity="0.023"/><rect x="762" y="609" width="101" height="1" fill="#fff" opacity="0.010"/><rect x="236" y="263" width="111" height="1" fill="#fff" opacity="0.019"/><rect x="612" y="659" width="160" height="1" fill="#fff" opacity="0.012"/><rect x="958" y="414" width="132" height="1" fill="#fff" opacity="0.021"/><rect x="216" y="723" width="117" height="1" fill="#000" opacity="0.039"/><rect x="578" y="144" width="91" height="1" fill="#000" opacity="0.033"/><rect x="884" y="460" width="50" height="1" fill="#fff" opacity="0.017"/><rect x="-43" y="731" width="63" height="1" fill="#fff" opacity="0.025"/><rect x="200" y="170" width="110" height="1" fill="#000" opacity="0.048"/><rect x="985" y="451" width="76" height="1" fill="#000" opacity="0.032"/><rect x="365" y="199" width="61" height="1" fill="#000" opacity="0.026"/><rect x="353" y="197" width="79" height="1" fill="#000" opacity="0.026"/><rect x="902" y="340" width="73" height="1" fill="#000" opacity="0.027"/><rect x="131" y="669" width="146" height="1" fill="#000" opacity="0.037"/><rect x="50" y="500" width="127" height="1" fill="#fff" opacity="0.020"/><rect x="134" y="602" width="146" height="1" fill="#fff" opacity="0.027"/><rect x="250" y="484" width="64" height="1" fill="#000" opacity="0.043"/><rect x="664" y="223" width="29" height="1" fill="#fff" opacity="0.011"/><rect x="-69" y="125" width="69" height="1" fill="#fff" opacity="0.012"/><rect x="772" y="221" width="37" height="1" fill="#000" opacity="0.046"/><rect x="134" y="659" width="105" height="1" fill="#fff" opacity="0.025"/><rect x="-77" y="432" width="80" height="1" fill="#fff" opacity="0.017"/><rect x="631" y="620" width="140" height="1" fill="#fff" opacity="0.022"/><rect x="628" y="185" width="155" height="1" fill="#fff" opacity="0.022"/><rect x="396" y="117" width="80" height="1" fill="#fff" opacity="0.024"/><rect x="800" y="104" width="44" height="1" fill="#000" opacity="0.035"/><rect x="429" y="158" width="62" height="1" fill="#fff" opacity="0.029"/><rect x="195" y="472" width="79" height="1" fill="#000" opacity="0.041"/><rect x="809" y="358" width="18" height="1" fill="#fff" opacity="0.030"/><rect x="927" y="581" width="138" height="1" fill="#000" opacity="0.044"/><rect x="52" y="119" width="61" height="1" fill="#000" opacity="0.039"/><rect x="703" y="697" width="136" height="1" fill="#000" opacity="0.041"/><rect x="705" y="542" width="73" height="1" fill="#000" opacity="0.038"/><rect x="639" y="160" width="99" height="1" fill="#000" opacity="0.029"/><rect x="-11" y="217" width="69" height="1" fill="#fff" opacity="0.017"/><rect x="578" y="561" width="134" height="1" fill="#fff" opacity="0.017"/><rect x="587" y="89" width="138" height="1" fill="#fff" opacity="0.010"/><rect x="-8" y="553" width="52" height="1" fill="#000" opacity="0.024"/><rect x="459" y="476" width="31" height="1" fill="#000" opacity="0.028"/><rect x="981" y="665" width="50" height="1" fill="#000" opacity="0.021"/><rect x="95" y="657" width="66" height="1" fill="#000" opacity="0.039"/><rect x="102" y="732" width="107" height="1" fill="#000" opacity="0.044"/><rect x="189" y="326" width="33" height="1" fill="#fff" opacity="0.025"/><rect x="942" y="454" width="77" height="1" fill="#fff" opacity="0.021"/><rect x="584" y="498" width="30" height="1" fill="#000" opacity="0.040"/><rect x="931" y="576" width="109" height="1" fill="#000" opacity="0.044"/><rect x="208" y="440" width="49" height="1" fill="#fff" opacity="0.028"/><rect x="729" y="547" width="129" height="1" fill="#fff" opacity="0.025"/><rect x="35" y="255" width="51" height="1" fill="#fff" opacity="0.016"/><rect x="597" y="668" width="33" height="1" fill="#000" opacity="0.038"/><rect x="266" y="164" width="92" height="1" fill="#000" opacity="0.050"/><rect x="777" y="448" width="32" height="1" fill="#000" opacity="0.030"/><rect x="464" y="262" width="80" height="1" fill="#000" opacity="0.043"/><rect x="448" y="724" width="75" height="1" fill="#000" opacity="0.027"/><rect x="817" y="492" width="66" height="1" fill="#000" opacity="0.028"/><rect x="103" y="596" width="65" height="1" fill="#fff" opacity="0.011"/><rect x="-1" y="215" width="35" height="1" fill="#fff" opacity="0.026"/><rect x="598" y="672" width="49" height="1" fill="#fff" opacity="0.015"/><rect x="-70" y="740" width="97" height="1" fill="#000" opacity="0.026"/><rect x="-45" y="417" width="139" height="1" fill="#fff" opacity="0.024"/><rect x="257" y="428" width="29" height="1" fill="#000" opacity="0.044"/><rect x="585" y="172" width="141" height="1" fill="#000" opacity="0.032"/><rect x="-73" y="557" width="21" height="1" fill="#000" opacity="0.037"/><rect x="14" y="403" width="121" height="1" fill="#000" opacity="0.042"/><rect x="220" y="420" width="38" height="1" fill="#fff" opacity="0.014"/><rect x="84" y="625" width="106" height="1" fill="#000" opacity="0.033"/><rect x="214" y="634" width="99" height="1" fill="#fff" opacity="0.022"/><rect x="-36" y="572" width="94" height="1" fill="#000" opacity="0.036"/><rect x="469" y="547" width="107" height="1" fill="#000" opacity="0.048"/><rect x="417" y="218" width="17" height="1" fill="#000" opacity="0.023"/><rect x="208" y="454" width="73" height="1" fill="#fff" opacity="0.030"/><rect x="174" y="111" width="46" height="1" fill="#fff" opacity="0.020"/><rect x="272" y="651" width="81" height="1" fill="#000" opacity="0.031"/><rect x="263" y="235" width="56" height="1" fill="#000" opacity="0.031"/><rect x="804" y="331" width="142" height="1" fill="#fff" opacity="0.028"/><rect x="842" y="481" width="69" height="1" fill="#fff" opacity="0.028"/><rect x="-69" y="193" width="31" height="1" fill="#000" opacity="0.047"/><rect x="22" y="442" width="73" height="1" fill="#000" opacity="0.032"/><rect x="358" y="467" width="22" height="1" fill="#fff" opacity="0.015"/><rect x="395" y="527" width="74" height="1" fill="#fff" opacity="0.017"/><rect x="470" y="518" width="91" height="1" fill="#000" opacity="0.035"/><rect x="220" y="666" width="137" height="1" fill="#000" opacity="0.046"/><rect x="179" y="356" width="91" height="1" fill="#fff" opacity="0.017"/><rect x="411" y="580" width="56" height="1" fill="#fff" opacity="0.022"/><rect x="334" y="546" width="28" height="1" fill="#000" opacity="0.026"/><rect x="-6" y="452" width="127" height="1" fill="#fff" opacity="0.027"/><rect x="-50" y="387" width="43" height="1" fill="#fff" opacity="0.028"/><rect x="519" y="219" width="53" height="1" fill="#000" opacity="0.031"/><rect x="851" y="255" width="116" height="1" fill="#fff" opacity="0.017"/><rect x="587" y="489" width="23" height="1" fill="#000" opacity="0.026"/><rect x="-69" y="725" width="24" height="1" fill="#fff" opacity="0.022"/><rect x="781" y="671" width="41" height="1" fill="#000" opacity="0.021"/><rect x="32" y="407" width="43" height="1" fill="#fff" opacity="0.020"/><rect x="976" y="222" width="124" height="1" fill="#fff" opacity="0.014"/><rect x="202" y="636" width="154" height="1" fill="#000" opacity="0.023"/><rect x="916" y="445" width="34" height="1" fill="#fff" opacity="0.014"/><rect x="48" y="312" width="84" height="1" fill="#000" opacity="0.020"/><rect x="41" y="358" width="26" height="1" fill="#fff" opacity="0.011"/><rect x="642" y="652" width="83" height="1" fill="#fff" opacity="0.024"/><rect x="829" y="751" width="154" height="1" fill="#fff" opacity="0.017"/><rect x="450" y="503" width="117" height="1" fill="#fff" opacity="0.021"/><rect x="209" y="475" width="114" height="1" fill="#000" opacity="0.046"/><rect x="-90" y="229" width="76" height="1" fill="#000" opacity="0.048"/><rect x="672" y="343" width="76" height="1" fill="#000" opacity="0.040"/><rect x="-32" y="171" width="27" height="1" fill="#fff" opacity="0.021"/><rect x="806" y="744" width="155" height="1" fill="#000" opacity="0.034"/><rect x="-99" y="674" width="136" height="1" fill="#000" opacity="0.046"/><rect x="601" y="605" width="154" height="1" fill="#000" opacity="0.027"/><rect x="675" y="727" width="105" height="1" fill="#000" opacity="0.032"/><rect x="445" y="621" width="97" height="1" fill="#fff" opacity="0.026"/><rect x="442" y="311" width="82" height="1" fill="#000" opacity="0.034"/><rect x="969" y="439" width="137" height="1" fill="#000" opacity="0.050"/><rect x="982" y="150" width="108" height="1" fill="#000" opacity="0.036"/><rect x="388" y="457" width="59" height="1" fill="#fff" opacity="0.023"/><rect x="-12" y="264" width="97" height="1" fill="#fff" opacity="0.027"/><rect x="151" y="521" width="119" height="1" fill="#fff" opacity="0.015"/><rect x="647" y="188" width="106" height="1" fill="#000" opacity="0.036"/><rect x="827" y="392" width="37" height="1" fill="#fff" opacity="0.016"/><rect x="128" y="539" width="130" height="1" fill="#000" opacity="0.042"/><rect x="959" y="261" width="53" height="1" fill="#fff" opacity="0.013"/><rect x="966" y="583" width="75" height="1" fill="#000" opacity="0.036"/><rect x="417" y="473" width="19" height="1" fill="#000" opacity="0.020"/><rect x="18" y="348" width="60" height="1" fill="#fff" opacity="0.021"/><rect x="423" y="414" width="76" height="1" fill="#fff" opacity="0.019"/><rect x="910" y="620" width="37" height="1" fill="#fff" opacity="0.018"/><rect x="661" y="380" width="26" height="1" fill="#000" opacity="0.031"/><rect x="504" y="125" width="119" height="1" fill="#fff" opacity="0.022"/><rect x="621" y="345" width="76" height="1" fill="#fff" opacity="0.022"/><rect x="292" y="716" width="110" height="1" fill="#fff" opacity="0.014"/><rect x="63" y="155" width="129" height="1" fill="#fff" opacity="0.021"/><rect x="-48" y="591" width="42" height="1" fill="#000" opacity="0.034"/><rect x="793" y="556" width="121" height="1" fill="#000" opacity="0.025"/><rect x="800" y="149" width="116" height="1" fill="#fff" opacity="0.020"/><rect x="375" y="92" width="66" height="1" fill="#fff" opacity="0.011"/><rect x="576" y="384" width="114" height="1" fill="#000" opacity="0.024"/><rect x="57" y="309" width="18" height="1" fill="#fff" opacity="0.012"/><rect x="830" y="303" width="29" height="1" fill="#000" opacity="0.026"/><rect x="888" y="426" width="29" height="1" fill="#000" opacity="0.042"/><rect x="187" y="680" width="119" height="1" fill="#000" opacity="0.046"/><rect x="556" y="232" width="100" height="1" fill="#fff" opacity="0.030"/><rect x="462" y="273" width="148" height="1" fill="#fff" opacity="0.016"/><rect x="511" y="344" width="157" height="1" fill="#fff" opacity="0.028"/><rect x="528" y="135" width="92" height="1" fill="#fff" opacity="0.018"/><rect x="426" y="529" width="93" height="1" fill="#fff" opacity="0.011"/><rect x="665" y="632" width="133" height="1" fill="#000" opacity="0.041"/><rect x="649" y="227" width="102" height="1" fill="#fff" opacity="0.028"/><rect x="4" y="652" width="95" height="1" fill="#fff" opacity="0.011"/><rect x="562" y="661" width="24" height="1" fill="#fff" opacity="0.026"/><rect x="310" y="381" width="68" height="1" fill="#000" opacity="0.038"/><rect x="731" y="548" width="128" height="1" fill="#fff" opacity="0.014"/><rect x="788" y="267" width="46" height="1" fill="#fff" opacity="0.027"/><rect x="918" y="156" width="61" height="1" fill="#fff" opacity="0.024"/><rect x="920" y="251" width="71" height="1" fill="#000" opacity="0.040"/><rect x="332" y="384" width="151" height="1" fill="#000" opacity="0.024"/><rect x="957" y="294" width="40" height="1" fill="#fff" opacity="0.014"/><rect x="3" y="176" width="121" height="1" fill="#fff" opacity="0.027"/><rect x="769" y="536" width="54" height="1" fill="#000" opacity="0.048"/><rect x="-15" y="219" width="55" height="1" fill="#000" opacity="0.029"/><rect x="552" y="321" width="158" height="1" fill="#000" opacity="0.029"/><rect x="564" y="347" width="155" height="1" fill="#000" opacity="0.025"/><rect x="701" y="319" width="23" height="1" fill="#fff" opacity="0.013"/><rect x="357" y="381" width="154" height="1" fill="#000" opacity="0.026"/><rect x="276" y="235" width="125" height="1" fill="#fff" opacity="0.018"/><rect x="620" y="122" width="46" height="1" fill="#000" opacity="0.026"/><rect x="973" y="754" width="149" height="1" fill="#fff" opacity="0.020"/><rect x="916" y="101" width="38" height="1" fill="#fff" opacity="0.016"/><rect x="81" y="393" width="66" height="1" fill="#fff" opacity="0.015"/><rect x="514" y="315" width="23" height="1" fill="#000" opacity="0.023"/><rect x="605" y="84" width="64" height="1" fill="#000" opacity="0.040"/><rect x="252" y="134" width="100" height="1" fill="#fff" opacity="0.020"/><rect x="645" y="420" width="60" height="1" fill="#fff" opacity="0.027"/><rect x="831" y="154" width="39" height="1" fill="#000" opacity="0.023"/><rect x="705" y="248" width="133" height="1" fill="#fff" opacity="0.011"/><rect x="99" y="676" width="120" height="1" fill="#000" opacity="0.024"/><rect x="622" y="674" width="34" height="1" fill="#fff" opacity="0.023"/><rect x="636" y="250" width="58" height="1" fill="#000" opacity="0.023"/><rect x="883" y="88" width="92" height="1" fill="#fff" opacity="0.012"/><rect x="139" y="327" width="54" height="1" fill="#fff" opacity="0.021"/><rect x="564" y="203" width="134" height="1" fill="#fff" opacity="0.021"/><rect x="937" y="126" width="80" height="1" fill="#fff" opacity="0.014"/><rect x="316" y="496" width="47" height="1" fill="#000" opacity="0.042"/><rect x="927" y="630" width="76" height="1" fill="#000" opacity="0.020"/><rect x="900" y="137" width="68" height="1" fill="#000" opacity="0.027"/><rect x="214" y="258" width="82" height="1" fill="#000" opacity="0.033"/><rect x="961" y="722" width="43" height="1" fill="#fff" opacity="0.028"/><rect x="345" y="169" width="74" height="1" fill="#fff" opacity="0.025"/><rect x="27" y="608" width="77" height="1" fill="#fff" opacity="0.017"/><rect x="-16" y="183" width="70" height="1" fill="#000" opacity="0.041"/><rect x="600" y="393" width="36" height="1" fill="#000" opacity="0.034"/><rect x="-78" y="270" width="96" height="1" fill="#000" opacity="0.032"/><rect x="-34" y="499" width="37" height="1" fill="#000" opacity="0.024"/><rect x="242" y="606" width="53" height="1" fill="#000" opacity="0.043"/><rect x="305" y="291" width="71" height="1" fill="#000" opacity="0.041"/><rect x="-95" y="151" width="137" height="1" fill="#fff" opacity="0.021"/><rect x="41" y="420" width="31" height="1" fill="#fff" opacity="0.023"/><rect x="742" y="457" width="38" height="1" fill="#000" opacity="0.049"/><rect x="232" y="679" width="141" height="1" fill="#000" opacity="0.042"/><rect x="431" y="221" width="92" height="1" fill="#000" opacity="0.042"/><rect x="237" y="687" width="126" height="1" fill="#fff" opacity="0.023"/><rect x="512" y="608" width="151" height="1" fill="#000" opacity="0.039"/><rect x="416" y="152" width="74" height="1" fill="#fff" opacity="0.022"/><rect x="384" y="658" width="141" height="1" fill="#000" opacity="0.048"/><rect x="702" y="134" width="116" height="1" fill="#000" opacity="0.040"/><rect x="676" y="433" width="118" height="1" fill="#000" opacity="0.027"/><rect x="773" y="430" width="93" height="1" fill="#fff" opacity="0.020"/><rect x="126" y="99" width="136" height="1" fill="#fff" opacity="0.022"/><rect x="198" y="551" width="100" height="1" fill="#000" opacity="0.022"/><rect x="854" y="486" width="23" height="1" fill="#fff" opacity="0.012"/><rect x="283" y="360" width="128" height="1" fill="#fff" opacity="0.021"/><rect x="147" y="330" width="70" height="1" fill="#000" opacity="0.021"/><rect x="698" y="271" width="84" height="1" fill="#fff" opacity="0.013"/><rect x="359" y="254" width="104" height="1" fill="#000" opacity="0.038"/><rect x="531" y="486" width="142" height="1" fill="#fff" opacity="0.028"/><rect x="287" y="704" width="56" height="1" fill="#fff" opacity="0.010"/><rect x="112" y="262" width="77" height="1" fill="#fff" opacity="0.026"/><rect x="621" y="339" width="40" height="1" fill="#000" opacity="0.042"/><rect x="671" y="609" width="49" height="1" fill="#000" opacity="0.047"/><rect x="55" y="509" width="146" height="1" fill="#000" opacity="0.033"/><rect x="641" y="385" width="93" height="1" fill="#000" opacity="0.039"/><rect x="969" y="467" width="30" height="1" fill="#000" opacity="0.035"/><rect x="-64" y="455" width="29" height="1" fill="#000" opacity="0.047"/><rect x="672" y="204" width="129" height="1" fill="#fff" opacity="0.020"/><rect x="839" y="238" width="23" height="1" fill="#000" opacity="0.034"/><rect x="455" y="90" width="51" height="1" fill="#fff" opacity="0.028"/><rect x="-5" y="603" width="115" height="1" fill="#fff" opacity="0.022"/><rect x="395" y="370" width="89" height="1" fill="#000" opacity="0.021"/><rect x="734" y="644" width="36" height="1" fill="#000" opacity="0.040"/><rect x="909" y="472" width="107" height="1" fill="#000" opacity="0.028"/><rect x="915" y="248" width="27" height="1" fill="#000" opacity="0.030"/><rect x="311" y="226" width="147" height="1" fill="#000" opacity="0.022"/><rect x="966" y="398" width="58" height="1" fill="#000" opacity="0.047"/><rect x="509" y="684" width="113" height="1" fill="#000" opacity="0.031"/><rect x="457" y="274" width="94" height="1" fill="#000" opacity="0.034"/><rect x="557" y="718" width="127" height="1" fill="#fff" opacity="0.024"/><rect x="706" y="453" width="96" height="1" fill="#fff" opacity="0.029"/><rect x="130" y="356" width="67" height="1" fill="#000" opacity="0.039"/><rect x="736" y="596" width="55" height="1" fill="#000" opacity="0.029"/><rect x="471" y="238" width="152" height="1" fill="#fff" opacity="0.021"/><rect x="56" y="504" width="85" height="1" fill="#fff" opacity="0.024"/><rect x="984" y="488" width="88" height="1" fill="#000" opacity="0.024"/><rect x="-76" y="543" width="25" height="1" fill="#000" opacity="0.041"/><rect x="624" y="395" width="107" height="1" fill="#fff" opacity="0.015"/><rect x="97" y="154" width="120" height="1" fill="#000" opacity="0.041"/><rect x="239" y="397" width="60" height="1" fill="#000" opacity="0.039"/><rect x="727" y="203" width="115" height="1" fill="#000" opacity="0.044"/><rect x="719" y="432" width="115" height="1" fill="#fff" opacity="0.017"/><rect x="193" y="273" width="151" height="1" fill="#000" opacity="0.032"/><rect x="173" y="378" width="69" height="1" fill="#fff" opacity="0.011"/><rect x="36" y="506" width="143" height="1" fill="#fff" opacity="0.021"/><rect x="785" y="324" width="118" height="1" fill="#fff" opacity="0.025"/><rect x="209" y="218" width="71" height="1" fill="#000" opacity="0.043"/><rect x="155" y="595" width="87" height="1" fill="#000" opacity="0.042"/><rect x="680" y="747" width="88" height="1" fill="#fff" opacity="0.024"/><rect x="463" y="476" width="32" height="1" fill="#000" opacity="0.038"/><rect x="459" y="604" width="69" height="1" fill="#000" opacity="0.029"/><rect x="61" y="451" width="107" height="1" fill="#fff" opacity="0.020"/><rect x="565" y="207" width="70" height="1" fill="#fff" opacity="0.023"/><rect x="815" y="225" width="85" height="1" fill="#000" opacity="0.049"/><rect x="-34" y="687" width="25" height="1" fill="#000" opacity="0.034"/><rect x="359" y="578" width="90" height="1" fill="#000" opacity="0.030"/><rect x="986" y="421" width="160" height="1" fill="#fff" opacity="0.021"/><rect x="476" y="296" width="152" height="1" fill="#000" opacity="0.027"/><rect x="-42" y="260" width="144" height="1" fill="#fff" opacity="0.017"/><rect x="460" y="728" width="37" height="1" fill="#000" opacity="0.032"/><rect x="737" y="607" width="72" height="1" fill="#000" opacity="0.046"/><rect x="660" y="139" width="151" height="1" fill="#fff" opacity="0.030"/><rect x="878" y="156" width="49" height="1" fill="#fff" opacity="0.029"/><rect x="831" y="715" width="63" height="1" fill="#fff" opacity="0.014"/><rect x="239" y="495" width="87" height="1" fill="#000" opacity="0.022"/><rect x="-67" y="611" width="127" height="1" fill="#000" opacity="0.044"/><rect x="443" y="284" width="66" height="1" fill="#000" opacity="0.041"/><rect x="-54" y="386" width="19" height="1" fill="#fff" opacity="0.014"/><rect x="440" y="96" width="157" height="1" fill="#fff" opacity="0.013"/><rect x="546" y="730" width="105" height="1" fill="#fff" opacity="0.011"/><rect x="627" y="262" width="122" height="1" fill="#000" opacity="0.044"/><rect x="109" y="548" width="102" height="1" fill="#fff" opacity="0.013"/><rect x="895" y="565" width="36" height="1" fill="#000" opacity="0.044"/><rect x="162" y="570" width="42" height="1" fill="#000" opacity="0.028"/><rect x="328" y="481" width="105" height="1" fill="#fff" opacity="0.010"/><rect x="469" y="280" width="147" height="1" fill="#fff" opacity="0.025"/><rect x="229" y="476" width="126" height="1" fill="#fff" opacity="0.010"/><rect x="988" y="302" width="112" height="1" fill="#fff" opacity="0.026"/><rect x="849" y="171" width="26" height="1" fill="#fff" opacity="0.021"/><rect x="562" y="155" width="101" height="1" fill="#000" opacity="0.047"/><rect x="321" y="579" width="16" height="1" fill="#fff" opacity="0.028"/><rect x="113" y="474" width="40" height="1" fill="#000" opacity="0.024"/><rect x="801" y="287" width="131" height="1" fill="#000" opacity="0.048"/><rect x="38" y="533" width="160" height="1" fill="#000" opacity="0.022"/><rect x="246" y="564" width="117" height="1" fill="#000" opacity="0.046"/><rect x="861" y="328" width="135" height="1" fill="#000" opacity="0.024"/><rect x="681" y="592" width="31" height="1" fill="#000" opacity="0.044"/><rect x="-90" y="317" width="115" height="1" fill="#000" opacity="0.042"/><rect x="-22" y="312" width="77" height="1" fill="#fff" opacity="0.030"/><rect x="-23" y="83" width="134" height="1" fill="#fff" opacity="0.015"/><rect x="-10" y="307" width="157" height="1" fill="#000" opacity="0.048"/><rect x="-16" y="352" width="54" height="1" fill="#fff" opacity="0.020"/><rect x="97" y="189" width="62" height="1" fill="#fff" opacity="0.021"/><rect x="948" y="713" width="97" height="1" fill="#fff" opacity="0.026"/><rect x="-96" y="473" width="33" height="1" fill="#000" opacity="0.037"/><rect x="929" y="170" width="158" height="1" fill="#000" opacity="0.038"/><rect x="58" y="633" width="28" height="1" fill="#000" opacity="0.038"/><rect x="712" y="551" width="16" height="1" fill="#000" opacity="0.026"/><rect x="938" y="274" width="132" height="1" fill="#fff" opacity="0.024"/><rect x="778" y="295" width="43" height="1" fill="#000" opacity="0.023"/><rect x="621" y="615" width="39" height="1" fill="#fff" opacity="0.015"/><rect x="83" y="186" width="109" height="1" fill="#fff" opacity="0.016"/><rect x="202" y="385" width="141" height="1" fill="#000" opacity="0.049"/><rect x="-86" y="279" width="35" height="1" fill="#fff" opacity="0.012"/><rect x="338" y="696" width="148" height="1" fill="#fff" opacity="0.030"/><rect x="331" y="708" width="35" height="1" fill="#000" opacity="0.045"/><rect x="176" y="114" width="125" height="1" fill="#000" opacity="0.022"/><rect x="500" y="716" width="128" height="1" fill="#fff" opacity="0.013"/><rect x="613" y="390" width="22" height="1" fill="#fff" opacity="0.012"/><rect x="233" y="536" width="136" height="1" fill="#000" opacity="0.045"/><rect x="461" y="416" width="78" height="1" fill="#fff" opacity="0.021"/><rect x="372" y="431" width="154" height="1" fill="#000" opacity="0.048"/><rect x="-97" y="419" width="76" height="1" fill="#000" opacity="0.044"/><rect x="230" y="627" width="41" height="1" fill="#fff" opacity="0.027"/><rect x="590" y="518" width="108" height="1" fill="#fff" opacity="0.012"/><rect x="229" y="552" width="69" height="1" fill="#000" opacity="0.039"/><rect x="401" y="634" width="119" height="1" fill="#000" opacity="0.036"/><rect x="83" y="729" width="69" height="1" fill="#fff" opacity="0.025"/><rect x="432" y="96" width="125" height="1" fill="#000" opacity="0.050"/><rect x="797" y="263" width="57" height="1" fill="#000" opacity="0.042"/><rect x="408" y="483" width="102" height="1" fill="#fff" opacity="0.011"/><rect x="431" y="297" width="51" height="1" fill="#000" opacity="0.038"/><rect x="522" y="483" width="34" height="1" fill="#fff" opacity="0.011"/><rect x="50" y="97" width="107" height="1" fill="#fff" opacity="0.021"/><rect x="945" y="588" width="85" height="1" fill="#000" opacity="0.034"/><rect x="422" y="185" width="92" height="1" fill="#fff" opacity="0.024"/><rect x="811" y="260" width="39" height="1" fill="#000" opacity="0.034"/><rect x="321" y="413" width="22" height="1" fill="#fff" opacity="0.026"/><rect x="327" y="192" width="104" height="1" fill="#000" opacity="0.028"/><rect x="289" y="93" width="33" height="1" fill="#000" opacity="0.025"/><rect x="538" y="684" width="82" height="1" fill="#fff" opacity="0.013"/><rect x="17" y="182" width="113" height="1" fill="#fff" opacity="0.012"/><rect x="357" y="680" width="30" height="1" fill="#fff" opacity="0.010"/><rect x="627" y="216" width="108" height="1" fill="#000" opacity="0.025"/><rect x="415" y="461" width="109" height="1" fill="#fff" opacity="0.020"/><rect x="408" y="197" width="57" height="1" fill="#fff" opacity="0.018"/><rect x="358" y="113" width="64" height="1" fill="#000" opacity="0.043"/><rect x="393" y="457" width="135" height="1" fill="#fff" opacity="0.010"/><rect x="672" y="184" width="109" height="1" fill="#fff" opacity="0.011"/></svg>
<div style="position:absolute;left:0px;top:757px;width:1024px;height:27px;background:#1c1c1c"></div>
<div style="position:absolute;left:122px;top:180px;width:1.2000000000000028px;height:550px;background:rgba(90,120,160,0.3)"></div>
<div style="position:absolute;left:756.2px;top:180px;width:1.1999999999999318px;height:550px;background:rgba(90,120,160,0.3)"></div>
<div style="position:absolute;left:143px;top:101px;width:597px;height:54.5px;background:#0c0c0c;border-radius:6px;box-shadow:0 1px 1px rgba(255,255,255,0.08)"></div>
<div style="position:absolute;left:145.2px;top:103px;width:83.0px;height:50.80000000000001px;border-radius:4px;background:linear-gradient(180deg,#56585c 0%,#4b4d51 100%)"></div>
<div style="position:absolute;left:230.2px;top:103px;width:83.0px;height:50.80000000000001px;border-radius:4px;background:linear-gradient(180deg,#c4c4c4 0px,#b3b3b3 2px,#aaaaaa 60%,#a2a2a2 100%);box-shadow:inset 0 -1px 0 rgba(0,0,0,0.15)"></div>
<div style="position:absolute;left:315.2px;top:103px;width:83.0px;height:50.80000000000001px;border-radius:4px;background:linear-gradient(180deg,#c4c4c4 0px,#b3b3b3 2px,#aaaaaa 60%,#a2a2a2 100%);box-shadow:inset 0 -1px 0 rgba(0,0,0,0.15)"></div>
<div style="position:absolute;left:400.2px;top:103px;width:83.0px;height:50.80000000000001px;border-radius:4px;background:linear-gradient(180deg,#c4c4c4 0px,#b3b3b3 2px,#aaaaaa 60%,#a2a2a2 100%);box-shadow:inset 0 -1px 0 rgba(0,0,0,0.15)"></div>
<div style="position:absolute;left:485.2px;top:103px;width:83.00000000000006px;height:50.80000000000001px;border-radius:4px;background:linear-gradient(180deg,#c4c4c4 0px,#b3b3b3 2px,#aaaaaa 60%,#a2a2a2 100%);box-shadow:inset 0 -1px 0 rgba(0,0,0,0.15)"></div>
<div style="position:absolute;left:570.2px;top:103px;width:83.0px;height:50.80000000000001px;border-radius:4px;background:linear-gradient(180deg,#c4c4c4 0px,#b3b3b3 2px,#aaaaaa 60%,#a2a2a2 100%);box-shadow:inset 0 -1px 0 rgba(0,0,0,0.15)"></div>
<div style="position:absolute;left:655.2px;top:103px;width:83.0px;height:50.80000000000001px;border-radius:4px;background:linear-gradient(180deg,#c4c4c4 0px,#b3b3b3 2px,#aaaaaa 60%,#a2a2a2 100%);box-shadow:inset 0 -1px 0 rgba(0,0,0,0.15)"></div>
<div style="position:absolute;left:805px;top:108.4px;width:171.5px;height:36.599999999999994px;background:#0c0c0c;border-radius:5px"></div>
<div style="position:absolute;left:806.8px;top:110.2px;width:82.90000000000009px;height:33.2px;border-radius:4px;background:linear-gradient(180deg,#c4c4c4 0px,#b3b3b3 2px,#aaaaaa 60%,#a2a2a2 100%);box-shadow:inset 0 -1px 0 rgba(0,0,0,0.15)"></div>
<div style="position:absolute;left:891.6px;top:110.2px;width:83.39999999999998px;height:33.2px;border-radius:4px;background:linear-gradient(180deg,#56585c 0%,#4b4d51 100%)"></div>
<div style="position:absolute;left:807.2px;top:213.4px;width:51.59999999999991px;height:36.599999999999994px;background:#0c0c0c;border-radius:4px"></div>
<div style="position:absolute;left:809px;top:215.2px;width:48px;height:32.60000000000002px;border-radius:3px;background:linear-gradient(180deg,#c4c4c4 0px,#b3b3b3 2px,#aaaaaa 60%,#a2a2a2 100%);box-shadow:inset 0 -1px 0 rgba(0,0,0,0.15)"></div>
<div style="position:absolute;left:657.3px;top:461.1px;width:52.30000000000007px;height:36.39999999999998px;background:#0c0c0c;border-radius:5px"></div>
<div style="position:absolute;left:659.3px;top:463.1px;width:48.30000000000007px;height:32.19999999999999px;border-radius:4px;background:linear-gradient(180deg,#56585c 0%,#4b4d51 100%)"></div>
<div style="position:absolute;left:657.3px;top:511.4px;width:52.30000000000007px;height:37.30000000000007px;background:#0c0c0c;border-radius:5px"></div>
<div style="position:absolute;left:659.3px;top:513.4px;width:48.30000000000007px;height:33.10000000000002px;border-radius:4px;background:linear-gradient(180deg,#c4c4c4 0px,#b3b3b3 2px,#aaaaaa 60%,#a2a2a2 100%);box-shadow:inset 0 -1px 0 rgba(0,0,0,0.15)"></div>
<div style="position:absolute;left:657.3px;top:562.1px;width:52.30000000000007px;height:36.39999999999998px;background:#0c0c0c;border-radius:5px"></div>
<div style="position:absolute;left:659.3px;top:564.1px;width:48.30000000000007px;height:32.19999999999993px;border-radius:4px;background:linear-gradient(180deg,#c4c4c4 0px,#b3b3b3 2px,#aaaaaa 60%,#a2a2a2 100%);box-shadow:inset 0 -1px 0 rgba(0,0,0,0.15)"></div>
<div style="position:absolute;left:657.3px;top:667.2px;width:52.30000000000007px;height:36.39999999999998px;background:#0c0c0c;border-radius:5px"></div>
<div style="position:absolute;left:659.3px;top:669.2px;width:48.30000000000007px;height:32.19999999999993px;border-radius:4px;background:linear-gradient(180deg,#c4c4c4 0px,#b3b3b3 2px,#aaaaaa 60%,#a2a2a2 100%);box-shadow:inset 0 -1px 0 rgba(0,0,0,0.15)"></div>
<div style="position:absolute;left:29.2px;top:181px;width:58.8px;height:22.80000000000001px;background:#202c42;box-shadow:0 1px 0 rgba(120,150,190,0.22)"></div>
<div style="position:absolute;left:54.4px;top:217.8px;width:7.899999999999999px;height:368.40000000000003px;background:#1e1e1c;box-shadow:inset 0 0 1px #000"></div>
<div style="position:absolute;left:54.4px;top:585.5px;width:7.899999999999999px;height:1.0px;background:#4a6a9a"></div>
<div style="position:absolute;left:921.2px;top:181px;width:58.799999999999955px;height:22.80000000000001px;background:#202c42;box-shadow:0 1px 0 rgba(120,150,190,0.22)"></div>
<div style="position:absolute;left:946.4px;top:217.8px;width:7.899999999999977px;height:368.40000000000003px;background:#1e1e1c;box-shadow:inset 0 0 1px #000"></div>
<div style="position:absolute;left:946.4px;top:585.5px;width:7.899999999999977px;height:1.0px;background:#4a6a9a"></div>
<div style="position:absolute;left:142.7px;top:181.2px;width:595.5px;height:232.40000000000003px;background:linear-gradient(180deg,#343432 0%,#30302e 35%,#262625 70%,#1c1c1c 100%);box-shadow:inset 0 0 0 1px #171717,0 0 1.5px rgba(0,0,0,0.5)"></div>
<div style="position:absolute;left:163px;top:201px;width:555px;height:191.2px;background:radial-gradient(ellipse 340px 235px at 270px 40px,#b9b9b7 0%,#acacaa 35%,#8c8c8a 70%,#6c6c69 100%);box-shadow:0 0 0 1.2px #1c1c1c,inset 0 0 2px rgba(0,0,0,0.3)"></div>
<div style="position:absolute;left:319.6px;top:211.4px;width:243.39999999999998px;height:27.799999999999983px;background:#4a4a4a;border-radius:3px"></div>
<div style="position:absolute;left:441.7px;top:213.2px;width:119.30000000000001px;height:24.200000000000017px;background:#c9c9c7;border-radius:0 2px 2px 0"></div>
<div class="kb" style="left:196.80px;top:479.40px;width:85.20px;height:85.20px"><div class="kf"></div></div>
<div class="kb" style="left:358.20px;top:479.20px;width:85.20px;height:85.20px"><div class="kf"></div></div>
<div class="kb" style="left:517.70px;top:479.60px;width:85.20px;height:85.20px"><div class="kf"></div></div>
<div class="kb ks" style="left:28.10px;top:651.70px;width:60.60px;height:60.60px"><div class="kf"></div></div>
<div class="kb ks" style="left:207.20px;top:651.50px;width:60.60px;height:60.60px"><div class="kf"></div></div>
<div class="kb ks" style="left:369.80px;top:651.60px;width:60.60px;height:60.60px"><div class="kf"></div></div>
<div class="kb ks" style="left:531.05px;top:650.90px;width:60.60px;height:60.60px"><div class="kf"></div></div>
<div class="kb ks" style="left:803.70px;top:303.30px;width:60.60px;height:60.60px"><div class="kf"></div></div>
<div class="kb ks" style="left:804.00px;top:498.50px;width:60.60px;height:60.60px"><div class="kf"></div></div>
<div class="kb ks" style="left:803.70px;top:650.70px;width:60.60px;height:60.60px"><div class="kf"></div></div>
<div class="kb ks" style="left:919.80px;top:651.00px;width:60.60px;height:60.60px"><div class="kf"></div></div>
<svg width="1024" height="784" viewBox="0 0 1024 784"><defs><radialGradient id="led" cx="0.45" cy="0.4" r="0.6"><stop offset="0" stop-color="#6e1a16"/><stop offset="1" stop-color="#3c0c0a"/></radialGradient></defs>
<text x="508.00" y="10.00" font-size="13.5" fill="#9c9c9c" text-anchor="middle" font-weight="bold" textLength="38" lengthAdjust="spacingAndGlyphs" stroke="#9c9c9c" stroke-width="0.3">Snare</text>
<path d="M1011.9 7.6 V3.2 M1009.3 5.2 L1011.9 2.6 L1014.5 5.2" stroke="#c8c8c8" stroke-width="1.6" fill="none"/>
<path d="M20.8 39.5 A10.3 10.3 0 1 0 33.6 39.5" stroke="#939393" stroke-width="1.8" fill="none" stroke-linecap="round"/>
<line x1="27.2" y1="36.2" x2="27.2" y2="46.8" stroke="#939393" stroke-width="1.8" stroke-linecap="round"/>
<text x="67.00" y="36.50" font-size="13.8" fill="#ececec" text-anchor="start" font-weight="normal" textLength="76.5" lengthAdjust="spacingAndGlyphs" stroke="#ececec" stroke-width="0.3">User Default</text>
<path d="M320.3 30.8 L323.6 34.1 L326.9 30.8" stroke="#8e8e8e" stroke-width="1.5" fill="none" stroke-linecap="round"/>
<path d="M77.9 57.8 L72.2 63 L77.9 68.4" stroke="#e2e2e2" stroke-width="1.7" fill="none" stroke-linecap="round"/>
<path d="M107.6 57.8 L113.3 63 L107.6 68.4" stroke="#e2e2e2" stroke-width="1.7" fill="none" stroke-linecap="round"/>
<text x="171.50" y="67.00" font-size="13.8" fill="#8e8e8e" text-anchor="middle" font-weight="normal" textLength="55.5" lengthAdjust="spacingAndGlyphs" stroke="#8e8e8e" stroke-width="0.3">Compare</text>
<text x="244.20" y="67.00" font-size="13.8" fill="#ededed" text-anchor="middle" font-weight="normal" textLength="30.6" lengthAdjust="spacingAndGlyphs" stroke="#ededed" stroke-width="0.3">Copy</text>
<text x="302.60" y="67.00" font-size="13.8" fill="#8e8e8e" text-anchor="middle" font-weight="normal" textLength="32.3" lengthAdjust="spacingAndGlyphs" stroke="#8e8e8e" stroke-width="0.3">Paste</text>
<text x="371.00" y="67.00" font-size="13.8" fill="#8e8e8e" text-anchor="middle" font-weight="normal" textLength="32.5" lengthAdjust="spacingAndGlyphs" stroke="#8e8e8e" stroke-width="0.3">Undo</text>
<text x="428.60" y="67.00" font-size="13.8" fill="#8e8e8e" text-anchor="middle" font-weight="normal" textLength="30.3" lengthAdjust="spacingAndGlyphs" stroke="#8e8e8e" stroke-width="0.3">Redo</text>
<text x="895.20" y="36.50" font-size="13.8" fill="#9a9a9a" text-anchor="end" font-weight="normal" textLength="68.6" lengthAdjust="spacingAndGlyphs" stroke="#9a9a9a" stroke-width="0.3">Side Chain:</text>
<text x="912.50" y="36.50" font-size="13.8" fill="#ececec" text-anchor="start" font-weight="normal" textLength="44.5" lengthAdjust="spacingAndGlyphs" stroke="#ececec" stroke-width="0.3">Internal</text>
<path d="M996 30.6 L999.7 27 L1003.4 30.6 M996 33.9 L999.7 37.6 L1003.4 33.9" stroke="#a0a0a0" stroke-width="1.3" fill="none" stroke-linecap="round"/>
<text x="895.20" y="67.00" font-size="13.8" fill="#9a9a9a" text-anchor="end" font-weight="normal" textLength="32.3" lengthAdjust="spacingAndGlyphs" stroke="#9a9a9a" stroke-width="0.3">View:</text>
<text x="912.00" y="67.00" font-size="13.8" fill="#ececec" text-anchor="start" font-weight="normal" textLength="34" lengthAdjust="spacingAndGlyphs" stroke="#ececec" stroke-width="0.3">100%</text>
<path d="M954.7 60.7 L958.3 57 L962 60.7 M954.7 64 L958.3 67.8 L962 64" stroke="#a0a0a0" stroke-width="1.3" fill="none" stroke-linecap="round"/>
<g stroke="#e6e6e6" stroke-width="1.5" fill="none" transform="translate(994.2 62.8) rotate(-45)"><rect x="-9" y="-3.2" width="11" height="6.4" rx="3.2"/><rect x="-2" y="-3.2" width="11" height="6.4" rx="3.2"/></g>
<text x="510.10" y="779.80" font-size="21" fill="#9a9a9a" text-anchor="middle" font-weight="normal" textLength="111.4" lengthAdjust="spacingAndGlyphs" stroke="#9a9a9a" stroke-width="0.3">Compressor</text>
<text x="185.30" y="123.60" font-size="14.2" fill="#6cb9ee" text-anchor="middle" font-weight="normal" stroke="#6cb9ee" stroke-width="0.3">Platinum</text>
<text x="185.30" y="140.70" font-size="14.2" fill="#6cb9ee" text-anchor="middle" font-weight="normal" stroke="#6cb9ee" stroke-width="0.3">Digital</text>
<text x="270.30" y="123.60" font-size="14.2" fill="#4a4a4a" text-anchor="middle" font-weight="normal" stroke="#4a4a4a" stroke-width="0.12">Studio</text>
<text x="270.30" y="140.70" font-size="14.2" fill="#4a4a4a" text-anchor="middle" font-weight="normal" stroke="#4a4a4a" stroke-width="0.12">VCA</text>
<text x="355.30" y="123.60" font-size="14.2" fill="#4a4a4a" text-anchor="middle" font-weight="normal" stroke="#4a4a4a" stroke-width="0.12">Studio</text>
<text x="355.30" y="140.70" font-size="14.2" fill="#4a4a4a" text-anchor="middle" font-weight="normal" stroke="#4a4a4a" stroke-width="0.12">FET</text>
<text x="440.30" y="123.60" font-size="14.2" fill="#4a4a4a" text-anchor="middle" font-weight="normal" stroke="#4a4a4a" stroke-width="0.12">Classic</text>
<text x="440.30" y="140.70" font-size="14.2" fill="#4a4a4a" text-anchor="middle" font-weight="normal" stroke="#4a4a4a" stroke-width="0.12">VCA</text>
<text x="525.30" y="123.60" font-size="14.2" fill="#4a4a4a" text-anchor="middle" font-weight="normal" stroke="#4a4a4a" stroke-width="0.12">Vintage</text>
<text x="525.30" y="140.70" font-size="14.2" fill="#4a4a4a" text-anchor="middle" font-weight="normal" stroke="#4a4a4a" stroke-width="0.12">VCA</text>
<text x="610.30" y="123.60" font-size="14.2" fill="#4a4a4a" text-anchor="middle" font-weight="normal" stroke="#4a4a4a" stroke-width="0.12">Vintage</text>
<text x="610.30" y="140.70" font-size="14.2" fill="#4a4a4a" text-anchor="middle" font-weight="normal" stroke="#4a4a4a" stroke-width="0.12">FET</text>
<text x="695.30" y="123.60" font-size="14.2" fill="#4a4a4a" text-anchor="middle" font-weight="normal" stroke="#4a4a4a" stroke-width="0.12">Vintage</text>
<text x="695.30" y="140.70" font-size="14.2" fill="#4a4a4a" text-anchor="middle" font-weight="normal" stroke="#4a4a4a" stroke-width="0.12">Opto</text>
<text x="849.00" y="132.40" font-size="14.2" fill="#4e4e4e" text-anchor="middle" font-weight="normal" textLength="64.6" lengthAdjust="spacingAndGlyphs" stroke="#4e4e4e" stroke-width="0.12">Side Chain</text>
<text x="934.00" y="132.40" font-size="14.2" fill="#6cb9ee" text-anchor="middle" font-weight="normal" textLength="42.3" lengthAdjust="spacingAndGlyphs" stroke="#6cb9ee" stroke-width="0.3">Output</text>
<text x="833.00" y="236.60" font-size="13.8" fill="#555555" text-anchor="middle" font-weight="normal" stroke="#555555" stroke-width="0.12">ON</text>
<text x="683.50" y="484.40" font-size="13.8" fill="#6cb9ee" text-anchor="middle" font-weight="normal" stroke="#6cb9ee" stroke-width="0.3">OFF</text>
<text x="683.50" y="534.95" font-size="13.8" fill="#555555" text-anchor="middle" font-weight="normal" stroke="#555555" stroke-width="0.12">0 dB</text>
<text x="683.50" y="585.20" font-size="13.8" fill="#555555" text-anchor="middle" font-weight="normal" stroke="#555555" stroke-width="0.12">-12 dB</text>
<text x="683.50" y="690.30" font-size="13.8" fill="#555555" text-anchor="middle" font-weight="normal" stroke="#555555" stroke-width="0.12">AUTO</text>
<text x="833.60" y="196.10" font-size="15.5" fill="#c3c9d3" text-anchor="middle" font-weight="normal" textLength="55.6" lengthAdjust="spacingAndGlyphs" stroke="#c3c9d3" stroke-width="0.3">LIMITER</text>
<circle cx="875.5" cy="189.8" r="6.7" fill="#1a1414"/>
<circle cx="875.5" cy="189.8" r="5.6" fill="url(#led)"/>
<text x="58.60" y="196.60" font-size="14" fill="#dcdcdc" text-anchor="middle" font-weight="normal" textLength="39.5" lengthAdjust="spacingAndGlyphs" stroke="#dcdcdc" stroke-width="0.3">-∞ dB</text>
<text x="50.00" y="224.10" font-size="11.5" fill="#a6aebb" text-anchor="end" font-weight="normal" stroke="#a6aebb" stroke-width="0.3">+3</text>
<line x1="64.8" y1="220.00" x2="70.8" y2="220.00" stroke="#7f8ea4" stroke-width="1.1"/>
<text x="50.00" y="260.42" font-size="11.5" fill="#a6aebb" text-anchor="end" font-weight="normal" stroke="#a6aebb" stroke-width="0.3">0</text>
<line x1="64.8" y1="256.32" x2="70.8" y2="256.32" stroke="#7f8ea4" stroke-width="1.1"/>
<text x="50.00" y="296.74" font-size="11.5" fill="#a6aebb" text-anchor="end" font-weight="normal" stroke="#a6aebb" stroke-width="0.3">-3</text>
<line x1="64.8" y1="292.64" x2="70.8" y2="292.64" stroke="#7f8ea4" stroke-width="1.1"/>
<text x="50.00" y="333.06" font-size="11.5" fill="#a6aebb" text-anchor="end" font-weight="normal" stroke="#a6aebb" stroke-width="0.3">-6</text>
<line x1="64.8" y1="328.96" x2="70.8" y2="328.96" stroke="#7f8ea4" stroke-width="1.1"/>
<text x="50.00" y="369.38" font-size="11.5" fill="#a6aebb" text-anchor="end" font-weight="normal" stroke="#a6aebb" stroke-width="0.3">-9</text>
<line x1="64.8" y1="365.28" x2="70.8" y2="365.28" stroke="#7f8ea4" stroke-width="1.1"/>
<text x="50.00" y="405.70" font-size="11.5" fill="#a6aebb" text-anchor="end" font-weight="normal" stroke="#a6aebb" stroke-width="0.3">-12</text>
<line x1="64.8" y1="401.60" x2="70.8" y2="401.60" stroke="#7f8ea4" stroke-width="1.1"/>
<text x="50.00" y="442.02" font-size="11.5" fill="#a6aebb" text-anchor="end" font-weight="normal" stroke="#a6aebb" stroke-width="0.3">-18</text>
<line x1="64.8" y1="437.92" x2="70.8" y2="437.92" stroke="#7f8ea4" stroke-width="1.1"/>
<text x="50.00" y="478.34" font-size="11.5" fill="#a6aebb" text-anchor="end" font-weight="normal" stroke="#a6aebb" stroke-width="0.3">-24</text>
<line x1="64.8" y1="474.24" x2="70.8" y2="474.24" stroke="#7f8ea4" stroke-width="1.1"/>
<text x="50.00" y="514.66" font-size="11.5" fill="#a6aebb" text-anchor="end" font-weight="normal" stroke="#a6aebb" stroke-width="0.3">-30</text>
<line x1="64.8" y1="510.56" x2="70.8" y2="510.56" stroke="#7f8ea4" stroke-width="1.1"/>
<text x="50.00" y="550.98" font-size="11.5" fill="#a6aebb" text-anchor="end" font-weight="normal" stroke="#a6aebb" stroke-width="0.3">-40</text>
<line x1="64.8" y1="546.88" x2="70.8" y2="546.88" stroke="#7f8ea4" stroke-width="1.1"/>
<text x="50.00" y="587.30" font-size="11.5" fill="#a6aebb" text-anchor="end" font-weight="normal" stroke="#a6aebb" stroke-width="0.3">-60</text>
<line x1="64.8" y1="583.20" x2="70.8" y2="583.20" stroke="#7f8ea4" stroke-width="1.1"/>
<text x="950.60" y="196.60" font-size="14" fill="#dcdcdc" text-anchor="middle" font-weight="normal" textLength="39.5" lengthAdjust="spacingAndGlyphs" stroke="#dcdcdc" stroke-width="0.3">-∞ dB</text>
<text x="942.00" y="224.10" font-size="11.5" fill="#a6aebb" text-anchor="end" font-weight="normal" stroke="#a6aebb" stroke-width="0.3">+3</text>
<line x1="956.8" y1="220.00" x2="962.8" y2="220.00" stroke="#7f8ea4" stroke-width="1.1"/>
<text x="942.00" y="260.42" font-size="11.5" fill="#a6aebb" text-anchor="end" font-weight="normal" stroke="#a6aebb" stroke-width="0.3">0</text>
<line x1="956.8" y1="256.32" x2="962.8" y2="256.32" stroke="#7f8ea4" stroke-width="1.1"/>
<text x="942.00" y="296.74" font-size="11.5" fill="#a6aebb" text-anchor="end" font-weight="normal" stroke="#a6aebb" stroke-width="0.3">-3</text>
<line x1="956.8" y1="292.64" x2="962.8" y2="292.64" stroke="#7f8ea4" stroke-width="1.1"/>
<text x="942.00" y="333.06" font-size="11.5" fill="#a6aebb" text-anchor="end" font-weight="normal" stroke="#a6aebb" stroke-width="0.3">-6</text>
<line x1="956.8" y1="328.96" x2="962.8" y2="328.96" stroke="#7f8ea4" stroke-width="1.1"/>
<text x="942.00" y="369.38" font-size="11.5" fill="#a6aebb" text-anchor="end" font-weight="normal" stroke="#a6aebb" stroke-width="0.3">-9</text>
<line x1="956.8" y1="365.28" x2="962.8" y2="365.28" stroke="#7f8ea4" stroke-width="1.1"/>
<text x="942.00" y="405.70" font-size="11.5" fill="#a6aebb" text-anchor="end" font-weight="normal" stroke="#a6aebb" stroke-width="0.3">-12</text>
<line x1="956.8" y1="401.60" x2="962.8" y2="401.60" stroke="#7f8ea4" stroke-width="1.1"/>
<text x="942.00" y="442.02" font-size="11.5" fill="#a6aebb" text-anchor="end" font-weight="normal" stroke="#a6aebb" stroke-width="0.3">-18</text>
<line x1="956.8" y1="437.92" x2="962.8" y2="437.92" stroke="#7f8ea4" stroke-width="1.1"/>
<text x="942.00" y="478.34" font-size="11.5" fill="#a6aebb" text-anchor="end" font-weight="normal" stroke="#a6aebb" stroke-width="0.3">-24</text>
<line x1="956.8" y1="474.24" x2="962.8" y2="474.24" stroke="#7f8ea4" stroke-width="1.1"/>
<text x="942.00" y="514.66" font-size="11.5" fill="#a6aebb" text-anchor="end" font-weight="normal" stroke="#a6aebb" stroke-width="0.3">-30</text>
<line x1="956.8" y1="510.56" x2="962.8" y2="510.56" stroke="#7f8ea4" stroke-width="1.1"/>
<text x="942.00" y="550.98" font-size="11.5" fill="#a6aebb" text-anchor="end" font-weight="normal" stroke="#a6aebb" stroke-width="0.3">-40</text>
<line x1="956.8" y1="546.88" x2="962.8" y2="546.88" stroke="#7f8ea4" stroke-width="1.1"/>
<text x="942.00" y="587.30" font-size="11.5" fill="#a6aebb" text-anchor="end" font-weight="normal" stroke="#a6aebb" stroke-width="0.3">-60</text>
<line x1="956.8" y1="583.20" x2="962.8" y2="583.20" stroke="#7f8ea4" stroke-width="1.1"/>
<text x="380.60" y="232.00" font-size="19" fill="#c6c6c6" text-anchor="middle" font-weight="normal" textLength="52" lengthAdjust="spacingAndGlyphs" stroke="#c6c6c6" stroke-width="0.3">Meter</text>
<text x="502.00" y="232.00" font-size="19" fill="#333333" text-anchor="middle" font-weight="normal" textLength="56" lengthAdjust="spacingAndGlyphs" stroke="#333333" stroke-width="0.3">Graph</text>
<path d="M265.00 364.58 A363.5 363.5 0 0 1 612.00 364.58" stroke="#3e3e3e" stroke-width="2.8" fill="none"/>
<line x1="265.00" y1="364.58" x2="238.42" y2="340.30" stroke="#4a4a4a" stroke-width="1.8"/>
<line x1="325.82" y1="338.40" x2="320.35" y2="329.44" stroke="#3e3e3e" stroke-width="2"/>
<line x1="383.14" y1="324.74" x2="380.19" y2="314.14" stroke="#3e3e3e" stroke-width="2"/>
<line x1="438.50" y1="320.50" x2="438.50" y2="286.90" stroke="#3a3a3a" stroke-width="2.2"/>
<line x1="455.36" y1="320.89" x2="456.24" y2="310.43" stroke="#3e3e3e" stroke-width="2"/>
<line x1="472.27" y1="322.07" x2="474.01" y2="311.72" stroke="#3e3e3e" stroke-width="2"/>
<line x1="489.25" y1="324.06" x2="491.84" y2="313.89" stroke="#3e3e3e" stroke-width="2"/>
<line x1="506.33" y1="326.89" x2="509.77" y2="316.96" stroke="#3e3e3e" stroke-width="2"/>
<line x1="523.56" y1="330.59" x2="537.71" y2="298.58" stroke="#3a3a3a" stroke-width="2.2"/>
<line x1="540.88" y1="335.22" x2="545.91" y2="326.00" stroke="#3e3e3e" stroke-width="2"/>
<line x1="558.39" y1="340.84" x2="564.16" y2="332.07" stroke="#3e3e3e" stroke-width="2"/>
<line x1="576.08" y1="347.54" x2="582.56" y2="339.28" stroke="#3e3e3e" stroke-width="2"/>
<line x1="593.95" y1="355.42" x2="601.10" y2="347.72" stroke="#3e3e3e" stroke-width="2"/>
<line x1="612.00" y1="364.58" x2="638.58" y2="340.30" stroke="#4a4a4a" stroke-width="1.8"/>
<text x="227.50" y="331.50" font-size="19.5" fill="#3a3a3a" text-anchor="middle" font-weight="normal" stroke="#3a3a3a" stroke-width="0.3">-50</text>
<text x="299.40" y="302.20" font-size="19.5" fill="#3a3a3a" text-anchor="middle" font-weight="normal" stroke="#3a3a3a" stroke-width="0.3">-30</text>
<text x="367.70" y="286.90" font-size="19.5" fill="#3a3a3a" text-anchor="middle" font-weight="normal" stroke="#3a3a3a" stroke-width="0.3">-20</text>
<text x="435.30" y="280.00" font-size="19.5" fill="#3a3a3a" text-anchor="middle" font-weight="normal" stroke="#3a3a3a" stroke-width="0.3">-10</text>
<text x="538.40" y="291.30" font-size="19.5" fill="#3a3a3a" text-anchor="middle" font-weight="normal" stroke="#3a3a3a" stroke-width="0.3">-5</text>
<text x="646.20" y="334.50" font-size="19.5" fill="#3a3a3a" text-anchor="middle" font-weight="normal" stroke="#3a3a3a" stroke-width="0.3">0</text>
<clipPath id="disp"><rect x="163" y="201" width="555" height="191.2"/></clipPath>
<g clip-path="url(#disp)"><path d="M575 398 L627.3 349.7" stroke="#0a0a0a" stroke-width="2.4"/><path d="M572 401 L590 384.5" stroke="#0a0a0a" stroke-width="4.4" stroke-linecap="round"/></g>
<text x="237.80" y="442.40" font-size="15.5" fill="#c3c9d3" text-anchor="middle" font-weight="normal" textLength="88.8" lengthAdjust="spacingAndGlyphs" stroke="#c3c9d3" stroke-width="0.3">THRESHOLD</text>
<line x1="216.90" y1="560.97" x2="212.90" y2="567.90" stroke="#a2aab6" stroke-width="2.3"/>
<line x1="200.43" y1="544.50" x2="193.50" y2="548.50" stroke="#a2aab6" stroke-width="2.3"/>
<line x1="194.40" y1="522.00" x2="186.40" y2="522.00" stroke="#a2aab6" stroke-width="2.3"/>
<line x1="200.43" y1="499.50" x2="193.50" y2="495.50" stroke="#a2aab6" stroke-width="2.3"/>
<line x1="216.90" y1="483.03" x2="212.90" y2="476.10" stroke="#a2aab6" stroke-width="2.3"/>
<line x1="239.40" y1="477.00" x2="239.40" y2="469.00" stroke="#a2aab6" stroke-width="2.3"/>
<line x1="261.90" y1="483.03" x2="265.90" y2="476.10" stroke="#a2aab6" stroke-width="2.3"/>
<line x1="278.37" y1="499.50" x2="285.30" y2="495.50" stroke="#a2aab6" stroke-width="2.3"/>
<line x1="284.40" y1="522.00" x2="292.40" y2="522.00" stroke="#a2aab6" stroke-width="2.3"/>
<line x1="278.37" y1="544.50" x2="285.30" y2="548.50" stroke="#a2aab6" stroke-width="2.3"/>
<line x1="261.90" y1="560.97" x2="265.90" y2="567.90" stroke="#a2aab6" stroke-width="2.3"/>
<line x1="214.71" y1="515.62" x2="200.67" y2="511.98" stroke="#222222" stroke-width="2.9" stroke-linecap="round"/>
<text x="200.00" y="470.50" font-size="12.5" fill="#adb5c0" text-anchor="middle" font-weight="normal" stroke="#adb5c0" stroke-width="0.3">-30</text>
<text x="272.80" y="470.50" font-size="12.5" fill="#adb5c0" text-anchor="middle" font-weight="normal" stroke="#adb5c0" stroke-width="0.3">-20</text>
<text x="170.70" y="525.30" font-size="12.5" fill="#adb5c0" text-anchor="middle" font-weight="normal" stroke="#adb5c0" stroke-width="0.3">-40</text>
<text x="305.60" y="525.30" font-size="12.5" fill="#adb5c0" text-anchor="middle" font-weight="normal" stroke="#adb5c0" stroke-width="0.3">-10</text>
<text x="200.50" y="579.70" font-size="12.5" fill="#adb5c0" text-anchor="middle" font-weight="normal" stroke="#adb5c0" stroke-width="0.3">-50</text>
<text x="270.50" y="579.70" font-size="12.5" fill="#adb5c0" text-anchor="middle" font-weight="normal" stroke="#adb5c0" stroke-width="0.3">0</text>
<text x="239.00" y="588.70" font-size="12.5" fill="#adb5c0" text-anchor="middle" font-weight="normal" stroke="#adb5c0" stroke-width="0.3">dB</text>
<text x="401.50" y="442.40" font-size="15.5" fill="#c3c9d3" text-anchor="middle" font-weight="normal" textLength="43.5" lengthAdjust="spacingAndGlyphs" stroke="#c3c9d3" stroke-width="0.3">RATIO</text>
<line x1="378.30" y1="560.77" x2="374.30" y2="567.70" stroke="#a2aab6" stroke-width="2.3"/>
<line x1="361.83" y1="544.30" x2="354.90" y2="548.30" stroke="#a2aab6" stroke-width="2.3"/>
<line x1="355.80" y1="521.80" x2="347.80" y2="521.80" stroke="#a2aab6" stroke-width="2.3"/>
<line x1="365.68" y1="493.66" x2="359.44" y2="488.66" stroke="#a2aab6" stroke-width="2.3"/>
<line x1="393.06" y1="477.47" x2="391.69" y2="469.59" stroke="#a2aab6" stroke-width="2.3"/>
<line x1="425.64" y1="484.28" x2="430.05" y2="477.60" stroke="#a2aab6" stroke-width="2.3"/>
<line x1="443.55" y1="507.74" x2="451.15" y2="505.25" stroke="#a2aab6" stroke-width="2.3"/>
<line x1="441.45" y1="541.10" x2="448.68" y2="544.53" stroke="#a2aab6" stroke-width="2.3"/>
<line x1="423.30" y1="560.77" x2="427.30" y2="567.70" stroke="#a2aab6" stroke-width="2.3"/>
<line x1="403.91" y1="496.49" x2="405.67" y2="482.10" stroke="#222222" stroke-width="2.9" stroke-linecap="round"/>
<text x="388.00" y="463.60" font-size="12.5" fill="#adb5c0" text-anchor="middle" font-weight="normal" stroke="#adb5c0" stroke-width="0.3">5</text>
<text x="436.25" y="473.90" font-size="12.5" fill="#adb5c0" text-anchor="middle" font-weight="normal" stroke="#adb5c0" stroke-width="0.3">8</text>
<text x="352.00" y="486.80" font-size="12.5" fill="#adb5c0" text-anchor="middle" font-weight="normal" stroke="#adb5c0" stroke-width="0.3">3</text>
<text x="460.70" y="506.40" font-size="12.5" fill="#adb5c0" text-anchor="middle" font-weight="normal" stroke="#adb5c0" stroke-width="0.3">12</text>
<text x="338.90" y="526.10" font-size="12.5" fill="#adb5c0" text-anchor="middle" font-weight="normal" stroke="#adb5c0" stroke-width="0.3">2</text>
<text x="342.50" y="557.50" font-size="12.5" fill="#adb5c0" text-anchor="middle" font-weight="normal" stroke="#adb5c0" stroke-width="0.3">1.4</text>
<text x="459.50" y="551.60" font-size="12.5" fill="#adb5c0" text-anchor="middle" font-weight="normal" stroke="#adb5c0" stroke-width="0.3">20</text>
<text x="369.30" y="579.30" font-size="12.5" fill="#adb5c0" text-anchor="middle" font-weight="normal" stroke="#adb5c0" stroke-width="0.3">1</text>
<text x="435.70" y="579.30" font-size="12.5" fill="#adb5c0" text-anchor="middle" font-weight="normal" stroke="#adb5c0" stroke-width="0.3">30</text>
<text x="400.50" y="588.60" font-size="12.5" fill="#adb5c0" text-anchor="middle" font-weight="normal" stroke="#adb5c0" stroke-width="0.3">:1</text>
<text x="565.00" y="442.40" font-size="15.5" fill="#c3c9d3" text-anchor="middle" font-weight="normal" textLength="66" lengthAdjust="spacingAndGlyphs" stroke="#c3c9d3" stroke-width="0.3">MAKE UP</text>
<line x1="537.80" y1="561.17" x2="533.80" y2="568.10" stroke="#a2aab6" stroke-width="2.3"/>
<line x1="522.44" y1="546.53" x2="515.71" y2="550.85" stroke="#a2aab6" stroke-width="2.3"/>
<line x1="515.50" y1="526.48" x2="507.54" y2="527.24" stroke="#a2aab6" stroke-width="2.3"/>
<line x1="518.52" y1="505.48" x2="511.10" y2="502.50" stroke="#a2aab6" stroke-width="2.3"/>
<line x1="530.83" y1="488.19" x2="525.59" y2="482.15" stroke="#a2aab6" stroke-width="2.3"/>
<line x1="549.69" y1="478.47" x2="547.80" y2="470.69" stroke="#a2aab6" stroke-width="2.3"/>
<line x1="570.91" y1="478.47" x2="572.80" y2="470.69" stroke="#a2aab6" stroke-width="2.3"/>
<line x1="589.77" y1="488.19" x2="595.01" y2="482.15" stroke="#a2aab6" stroke-width="2.3"/>
<line x1="602.08" y1="505.48" x2="609.50" y2="502.50" stroke="#a2aab6" stroke-width="2.3"/>
<line x1="605.10" y1="526.48" x2="613.06" y2="527.24" stroke="#a2aab6" stroke-width="2.3"/>
<line x1="598.16" y1="546.53" x2="604.89" y2="550.85" stroke="#a2aab6" stroke-width="2.3"/>
<line x1="582.80" y1="561.17" x2="586.80" y2="568.10" stroke="#a2aab6" stroke-width="2.3"/>
<line x1="554.30" y1="497.41" x2="550.89" y2="483.32" stroke="#222222" stroke-width="2.9" stroke-linecap="round"/>
<text x="543.00" y="464.70" font-size="12.5" fill="#adb5c0" text-anchor="middle" font-weight="normal" stroke="#adb5c0" stroke-width="0.3">5</text>
<text x="578.50" y="464.70" font-size="12.5" fill="#adb5c0" text-anchor="middle" font-weight="normal" stroke="#adb5c0" stroke-width="0.3">10</text>
<text x="517.50" y="478.80" font-size="12.5" fill="#adb5c0" text-anchor="middle" font-weight="normal" stroke="#adb5c0" stroke-width="0.3">0</text>
<text x="604.50" y="478.80" font-size="12.5" fill="#adb5c0" text-anchor="middle" font-weight="normal" stroke="#adb5c0" stroke-width="0.3">15</text>
<text x="500.50" y="503.00" font-size="12.5" fill="#adb5c0" text-anchor="middle" font-weight="normal" stroke="#adb5c0" stroke-width="0.3">-5</text>
<text x="619.50" y="503.00" font-size="12.5" fill="#adb5c0" text-anchor="middle" font-weight="normal" stroke="#adb5c0" stroke-width="0.3">20</text>
<text x="493.20" y="532.00" font-size="12.5" fill="#adb5c0" text-anchor="middle" font-weight="normal" stroke="#adb5c0" stroke-width="0.3">-10</text>
<text x="624.00" y="532.00" font-size="12.5" fill="#adb5c0" text-anchor="middle" font-weight="normal" stroke="#adb5c0" stroke-width="0.3">30</text>
<text x="503.50" y="560.00" font-size="12.5" fill="#adb5c0" text-anchor="middle" font-weight="normal" stroke="#adb5c0" stroke-width="0.3">-15</text>
<text x="617.00" y="560.00" font-size="12.5" fill="#adb5c0" text-anchor="middle" font-weight="normal" stroke="#adb5c0" stroke-width="0.3">40</text>
<text x="520.50" y="579.80" font-size="12.5" fill="#adb5c0" text-anchor="middle" font-weight="normal" stroke="#adb5c0" stroke-width="0.3">-20</text>
<text x="596.00" y="579.80" font-size="12.5" fill="#adb5c0" text-anchor="middle" font-weight="normal" stroke="#adb5c0" stroke-width="0.3">50</text>
<text x="560.30" y="588.70" font-size="12.5" fill="#adb5c0" text-anchor="middle" font-weight="normal" stroke="#adb5c0" stroke-width="0.3">dB</text>
<text x="683.20" y="445.90" font-size="15.5" fill="#c3c9d3" text-anchor="middle" font-weight="normal" textLength="80.3" lengthAdjust="spacingAndGlyphs" stroke="#c3c9d3" stroke-width="0.3">AUTO GAIN</text>
<text x="59.20" y="611.80" font-size="15.5" fill="#c3c9d3" text-anchor="middle" font-weight="normal" textLength="83.7" lengthAdjust="spacingAndGlyphs" stroke="#c3c9d3" stroke-width="0.3">INPUT GAIN</text>
<line x1="41.60" y1="711.10" x2="38.80" y2="715.95" stroke="#a2aab6" stroke-width="2.2"/>
<line x1="25.31" y1="687.83" x2="19.80" y2="688.81" stroke="#a2aab6" stroke-width="2.2"/>
<line x1="32.66" y1="660.40" x2="28.37" y2="656.80" stroke="#a2aab6" stroke-width="2.2"/>
<line x1="58.40" y1="648.40" x2="58.40" y2="642.80" stroke="#a2aab6" stroke-width="2.2"/>
<line x1="84.14" y1="660.40" x2="88.43" y2="656.80" stroke="#a2aab6" stroke-width="2.2"/>
<line x1="91.49" y1="687.83" x2="97.00" y2="688.81" stroke="#a2aab6" stroke-width="2.2"/>
<line x1="75.20" y1="711.10" x2="78.00" y2="715.95" stroke="#a2aab6" stroke-width="2.2"/>
<line x1="60.39" y1="663.10" x2="61.48" y2="652.66" stroke="#222222" stroke-width="2.2" stroke-linecap="round"/>
<text x="58.40" y="633.23" font-size="12" fill="#adb5c0" text-anchor="middle" font-weight="normal" stroke="#adb5c0" stroke-width="0.3">0</text>
<text x="24.75" y="730.73" font-size="12" fill="#adb5c0" text-anchor="middle" font-weight="normal" stroke="#adb5c0" stroke-width="0.3">-30</text>
<text x="88.60" y="730.73" font-size="12" fill="#adb5c0" text-anchor="middle" font-weight="normal" stroke="#adb5c0" stroke-width="0.3">30</text>
<text x="58.90" y="737.33" font-size="12" fill="#adb5c0" text-anchor="middle" font-weight="normal" stroke="#adb5c0" stroke-width="0.3">dB</text>
<text x="237.70" y="611.80" font-size="15.5" fill="#c3c9d3" text-anchor="middle" font-weight="normal" textLength="40" lengthAdjust="spacingAndGlyphs" stroke="#c3c9d3" stroke-width="0.3">KNEE</text>
<line x1="220.70" y1="710.90" x2="217.90" y2="715.75" stroke="#a2aab6" stroke-width="2.2"/>
<line x1="208.40" y1="698.60" x2="203.55" y2="701.40" stroke="#a2aab6" stroke-width="2.2"/>
<line x1="203.90" y1="681.80" x2="198.30" y2="681.80" stroke="#a2aab6" stroke-width="2.2"/>
<line x1="208.40" y1="665.00" x2="203.55" y2="662.20" stroke="#a2aab6" stroke-width="2.2"/>
<line x1="220.70" y1="652.70" x2="217.90" y2="647.85" stroke="#a2aab6" stroke-width="2.2"/>
<line x1="237.50" y1="648.20" x2="237.50" y2="642.60" stroke="#a2aab6" stroke-width="2.2"/>
<line x1="254.30" y1="652.70" x2="257.10" y2="647.85" stroke="#a2aab6" stroke-width="2.2"/>
<line x1="266.60" y1="665.00" x2="271.45" y2="662.20" stroke="#a2aab6" stroke-width="2.2"/>
<line x1="271.10" y1="681.80" x2="276.70" y2="681.80" stroke="#a2aab6" stroke-width="2.2"/>
<line x1="266.60" y1="698.60" x2="271.45" y2="701.40" stroke="#a2aab6" stroke-width="2.2"/>
<line x1="254.30" y1="710.90" x2="257.10" y2="715.75" stroke="#a2aab6" stroke-width="2.2"/>
<line x1="221.32" y1="672.83" x2="212.57" y2="667.98" stroke="#222222" stroke-width="2.2" stroke-linecap="round"/>
<text x="204.80" y="640.83" font-size="12" fill="#adb5c0" text-anchor="middle" font-weight="normal" stroke="#adb5c0" stroke-width="0.3">0.4</text>
<text x="268.60" y="640.83" font-size="12" fill="#adb5c0" text-anchor="middle" font-weight="normal" stroke="#adb5c0" stroke-width="0.3">0.6</text>
<text x="181.60" y="685.93" font-size="12" fill="#adb5c0" text-anchor="middle" font-weight="normal" stroke="#adb5c0" stroke-width="0.3">0.2</text>
<text x="292.40" y="685.93" font-size="12" fill="#adb5c0" text-anchor="middle" font-weight="normal" stroke="#adb5c0" stroke-width="0.3">0.8</text>
<text x="210.30" y="732.03" font-size="12" fill="#adb5c0" text-anchor="middle" font-weight="normal" stroke="#adb5c0" stroke-width="0.3">0</text>
<text x="268.30" y="732.03" font-size="12" fill="#adb5c0" text-anchor="middle" font-weight="normal" stroke="#adb5c0" stroke-width="0.3">1.0</text>
<text x="400.70" y="611.80" font-size="15.5" fill="#c3c9d3" text-anchor="middle" font-weight="normal" textLength="56" lengthAdjust="spacingAndGlyphs" stroke="#c3c9d3" stroke-width="0.3">ATTACK</text>
<line x1="383.30" y1="711.00" x2="380.50" y2="715.85" stroke="#a2aab6" stroke-width="2.2"/>
<line x1="371.00" y1="698.70" x2="366.15" y2="701.50" stroke="#a2aab6" stroke-width="2.2"/>
<line x1="366.50" y1="681.90" x2="360.90" y2="681.90" stroke="#a2aab6" stroke-width="2.2"/>
<line x1="371.00" y1="665.10" x2="366.15" y2="662.30" stroke="#a2aab6" stroke-width="2.2"/>
<line x1="383.30" y1="652.80" x2="380.50" y2="647.95" stroke="#a2aab6" stroke-width="2.2"/>
<line x1="400.10" y1="648.30" x2="400.10" y2="642.70" stroke="#a2aab6" stroke-width="2.2"/>
<line x1="416.90" y1="652.80" x2="419.70" y2="647.95" stroke="#a2aab6" stroke-width="2.2"/>
<line x1="429.20" y1="665.10" x2="434.05" y2="662.30" stroke="#a2aab6" stroke-width="2.2"/>
<line x1="433.70" y1="681.90" x2="439.30" y2="681.90" stroke="#a2aab6" stroke-width="2.2"/>
<line x1="429.20" y1="698.70" x2="434.05" y2="701.50" stroke="#a2aab6" stroke-width="2.2"/>
<line x1="416.90" y1="711.00" x2="419.70" y2="715.85" stroke="#a2aab6" stroke-width="2.2"/>
<line x1="384.08" y1="691.15" x2="375.42" y2="696.15" stroke="#222222" stroke-width="2.2" stroke-linecap="round"/>
<text x="399.80" y="633.43" font-size="12" fill="#adb5c0" text-anchor="middle" font-weight="normal" stroke="#adb5c0" stroke-width="0.3">50</text>
<text x="369.80" y="640.83" font-size="12" fill="#adb5c0" text-anchor="middle" font-weight="normal" stroke="#adb5c0" stroke-width="0.3">20</text>
<text x="430.40" y="640.83" font-size="12" fill="#adb5c0" text-anchor="middle" font-weight="normal" stroke="#adb5c0" stroke-width="0.3">80</text>
<text x="353.00" y="660.23" font-size="12" fill="#adb5c0" text-anchor="middle" font-weight="normal" stroke="#adb5c0" stroke-width="0.3">15</text>
<text x="454.50" y="666.63" font-size="12" fill="#adb5c0" text-anchor="middle" font-weight="normal" stroke="#adb5c0" stroke-width="0.3">120</text>
<text x="346.00" y="685.93" font-size="12" fill="#adb5c0" text-anchor="middle" font-weight="normal" stroke="#adb5c0" stroke-width="0.3">10</text>
<text x="454.50" y="702.13" font-size="12" fill="#adb5c0" text-anchor="middle" font-weight="normal" stroke="#adb5c0" stroke-width="0.3">160</text>
<text x="354.60" y="711.73" font-size="12" fill="#adb5c0" text-anchor="middle" font-weight="normal" stroke="#adb5c0" stroke-width="0.3">5</text>
<text x="372.40" y="732.03" font-size="12" fill="#adb5c0" text-anchor="middle" font-weight="normal" stroke="#adb5c0" stroke-width="0.3">0</text>
<text x="433.60" y="732.03" font-size="12" fill="#adb5c0" text-anchor="middle" font-weight="normal" stroke="#adb5c0" stroke-width="0.3">200</text>
<text x="399.10" y="736.13" font-size="12" fill="#adb5c0" text-anchor="middle" font-weight="normal" stroke="#adb5c0" stroke-width="0.3">ms</text>
<text x="562.00" y="611.80" font-size="15.5" fill="#c3c9d3" text-anchor="middle" font-weight="normal" textLength="62" lengthAdjust="spacingAndGlyphs" stroke="#c3c9d3" stroke-width="0.3">RELEASE</text>
<line x1="544.55" y1="710.30" x2="541.75" y2="715.15" stroke="#a2aab6" stroke-width="2.2"/>
<line x1="532.55" y1="698.51" x2="527.75" y2="701.39" stroke="#a2aab6" stroke-width="2.2"/>
<line x1="527.75" y1="681.20" x2="522.15" y2="681.20" stroke="#a2aab6" stroke-width="2.2"/>
<line x1="535.27" y1="660.01" x2="530.93" y2="656.48" stroke="#a2aab6" stroke-width="2.2"/>
<line x1="550.47" y1="649.41" x2="548.65" y2="644.11" stroke="#a2aab6" stroke-width="2.2"/>
<line x1="567.93" y1="648.25" x2="569.03" y2="642.76" stroke="#a2aab6" stroke-width="2.2"/>
<line x1="587.09" y1="659.60" x2="591.38" y2="656.00" stroke="#a2aab6" stroke-width="2.2"/>
<line x1="594.74" y1="677.45" x2="600.31" y2="676.83" stroke="#a2aab6" stroke-width="2.2"/>
<line x1="592.80" y1="693.02" x2="598.04" y2="694.99" stroke="#a2aab6" stroke-width="2.2"/>
<line x1="578.15" y1="710.30" x2="580.95" y2="715.15" stroke="#a2aab6" stroke-width="2.2"/>
<line x1="551.55" y1="665.51" x2="546.25" y2="657.03" stroke="#222222" stroke-width="2.2" stroke-linecap="round"/>
<text x="536.90" y="635.13" font-size="12" fill="#adb5c0" text-anchor="middle" font-weight="normal" stroke="#adb5c0" stroke-width="0.3">100</text>
<text x="580.60" y="635.13" font-size="12" fill="#adb5c0" text-anchor="middle" font-weight="normal" stroke="#adb5c0" stroke-width="0.3">200</text>
<text x="518.30" y="651.53" font-size="12" fill="#adb5c0" text-anchor="middle" font-weight="normal" stroke="#adb5c0" stroke-width="0.3">50</text>
<text x="607.20" y="651.53" font-size="12" fill="#adb5c0" text-anchor="middle" font-weight="normal" stroke="#adb5c0" stroke-width="0.3">500</text>
<text x="506.50" y="684.93" font-size="12" fill="#adb5c0" text-anchor="middle" font-weight="normal" stroke="#adb5c0" stroke-width="0.3">20</text>
<text x="614.00" y="677.53" font-size="12" fill="#adb5c0" text-anchor="middle" font-weight="normal" stroke="#adb5c0" stroke-width="0.3">1k</text>
<text x="513.40" y="711.13" font-size="12" fill="#adb5c0" text-anchor="middle" font-weight="normal" stroke="#adb5c0" stroke-width="0.3">10</text>
<text x="612.60" y="702.93" font-size="12" fill="#adb5c0" text-anchor="middle" font-weight="normal" stroke="#adb5c0" stroke-width="0.3">2k</text>
<text x="534.70" y="730.83" font-size="12" fill="#adb5c0" text-anchor="middle" font-weight="normal" stroke="#adb5c0" stroke-width="0.3">5</text>
<text x="590.70" y="730.83" font-size="12" fill="#adb5c0" text-anchor="middle" font-weight="normal" stroke="#adb5c0" stroke-width="0.3">5k</text>
<text x="560.70" y="736.33" font-size="12" fill="#adb5c0" text-anchor="middle" font-weight="normal" stroke="#adb5c0" stroke-width="0.3">ms</text>
<text x="832.80" y="274.60" font-size="15.5" fill="#c3c9d3" text-anchor="middle" font-weight="normal" textLength="88.6" lengthAdjust="spacingAndGlyphs" stroke="#c3c9d3" stroke-width="0.3">THRESHOLD</text>
<line x1="817.20" y1="362.70" x2="814.40" y2="367.55" stroke="#a2aab6" stroke-width="2.2"/>
<line x1="804.90" y1="350.40" x2="800.05" y2="353.20" stroke="#a2aab6" stroke-width="2.2"/>
<line x1="800.40" y1="333.60" x2="794.80" y2="333.60" stroke="#a2aab6" stroke-width="2.2"/>
<line x1="804.90" y1="316.80" x2="800.05" y2="314.00" stroke="#a2aab6" stroke-width="2.2"/>
<line x1="817.20" y1="304.50" x2="814.40" y2="299.65" stroke="#a2aab6" stroke-width="2.2"/>
<line x1="834.00" y1="300.00" x2="834.00" y2="294.40" stroke="#a2aab6" stroke-width="2.2"/>
<line x1="850.80" y1="304.50" x2="853.60" y2="299.65" stroke="#a2aab6" stroke-width="2.2"/>
<line x1="863.10" y1="316.80" x2="867.95" y2="314.00" stroke="#a2aab6" stroke-width="2.2"/>
<line x1="867.60" y1="333.60" x2="873.20" y2="333.60" stroke="#a2aab6" stroke-width="2.2"/>
<line x1="863.10" y1="350.40" x2="867.95" y2="353.20" stroke="#a2aab6" stroke-width="2.2"/>
<line x1="850.80" y1="362.70" x2="853.60" y2="367.55" stroke="#a2aab6" stroke-width="2.2"/>
<line x1="843.25" y1="349.62" x2="848.25" y2="358.28" stroke="#222222" stroke-width="2.2" stroke-linecap="round"/>
<text x="805.30" y="292.13" font-size="12" fill="#adb5c0" text-anchor="middle" font-weight="normal" stroke="#adb5c0" stroke-width="0.3">-6</text>
<text x="864.30" y="292.13" font-size="12" fill="#adb5c0" text-anchor="middle" font-weight="normal" stroke="#adb5c0" stroke-width="0.3">-4</text>
<text x="779.80" y="337.33" font-size="12" fill="#adb5c0" text-anchor="middle" font-weight="normal" stroke="#adb5c0" stroke-width="0.3">-8</text>
<text x="887.30" y="337.33" font-size="12" fill="#adb5c0" text-anchor="middle" font-weight="normal" stroke="#adb5c0" stroke-width="0.3">-2</text>
<text x="801.50" y="382.93" font-size="12" fill="#adb5c0" text-anchor="middle" font-weight="normal" stroke="#adb5c0" stroke-width="0.3">-10</text>
<text x="860.50" y="382.93" font-size="12" fill="#adb5c0" text-anchor="middle" font-weight="normal" stroke="#adb5c0" stroke-width="0.3">0</text>
<text x="834.00" y="389.53" font-size="12" fill="#adb5c0" text-anchor="middle" font-weight="normal" stroke="#adb5c0" stroke-width="0.3">dB</text>
<text x="834.00" y="463.00" font-size="15.5" fill="#c3c9d3" text-anchor="middle" font-weight="normal" textLength="88.2" lengthAdjust="spacingAndGlyphs" stroke="#c3c9d3" stroke-width="0.3">DISTORTION</text>
<line x1="805.49" y1="512.70" x2="800.08" y2="509.68" stroke="#a2aab6" stroke-width="2.2"/>
<line x1="822.91" y1="497.83" x2="820.76" y2="492.01" stroke="#a2aab6" stroke-width="2.2"/>
<line x1="845.69" y1="497.83" x2="847.84" y2="492.01" stroke="#a2aab6" stroke-width="2.2"/>
<line x1="863.11" y1="512.70" x2="868.52" y2="509.68" stroke="#a2aab6" stroke-width="2.2"/>
<line x1="817.97" y1="520.11" x2="809.14" y2="515.42" stroke="#222222" stroke-width="2.2" stroke-linecap="round"/>
<text x="815.40" y="480.93" font-size="12" fill="#adb5c0" text-anchor="middle" font-weight="normal" stroke="#adb5c0" stroke-width="0.3">Soft</text>
<text x="855.90" y="480.93" font-size="12" fill="#adb5c0" text-anchor="middle" font-weight="normal" stroke="#adb5c0" stroke-width="0.3">Hard</text>
<text x="783.80" y="506.73" font-size="12" fill="#adb5c0" text-anchor="middle" font-weight="normal" stroke="#adb5c0" stroke-width="0.3">Off</text>
<text x="885.60" y="506.73" font-size="12" fill="#adb5c0" text-anchor="middle" font-weight="normal" stroke="#adb5c0" stroke-width="0.3">Clip</text>
<text x="834.30" y="611.60" font-size="15.5" fill="#c3c9d3" text-anchor="middle" font-weight="normal" textLength="26" lengthAdjust="spacingAndGlyphs" stroke="#c3c9d3" stroke-width="0.3">MIX</text>
<line x1="817.20" y1="710.10" x2="814.40" y2="714.95" stroke="#a2aab6" stroke-width="2.2"/>
<line x1="804.90" y1="697.80" x2="800.05" y2="700.60" stroke="#a2aab6" stroke-width="2.2"/>
<line x1="800.40" y1="681.00" x2="794.80" y2="681.00" stroke="#a2aab6" stroke-width="2.2"/>
<line x1="804.90" y1="664.20" x2="800.05" y2="661.40" stroke="#a2aab6" stroke-width="2.2"/>
<line x1="817.20" y1="651.90" x2="814.40" y2="647.05" stroke="#a2aab6" stroke-width="2.2"/>
<line x1="834.00" y1="647.40" x2="834.00" y2="641.80" stroke="#a2aab6" stroke-width="2.2"/>
<line x1="850.80" y1="651.90" x2="853.60" y2="647.05" stroke="#a2aab6" stroke-width="2.2"/>
<line x1="863.10" y1="664.20" x2="867.95" y2="661.40" stroke="#a2aab6" stroke-width="2.2"/>
<line x1="867.60" y1="681.00" x2="873.20" y2="681.00" stroke="#a2aab6" stroke-width="2.2"/>
<line x1="863.10" y1="697.80" x2="867.95" y2="700.60" stroke="#a2aab6" stroke-width="2.2"/>
<line x1="850.80" y1="710.10" x2="853.60" y2="714.95" stroke="#a2aab6" stroke-width="2.2"/>
<line x1="834.00" y1="662.50" x2="834.00" y2="652.50" stroke="#222222" stroke-width="2.2" stroke-linecap="round"/>
<text x="832.90" y="632.93" font-size="12" fill="#adb5c0" text-anchor="middle" font-weight="normal" stroke="#adb5c0" stroke-width="0.3">1:1</text>
<text x="796.80" y="730.53" font-size="12" fill="#adb5c0" text-anchor="middle" font-weight="normal" stroke="#adb5c0" stroke-width="0.3">Input</text>
<text x="875.90" y="730.53" font-size="12" fill="#adb5c0" text-anchor="middle" font-weight="normal" stroke="#adb5c0" stroke-width="0.3">Output</text>
<text x="950.50" y="611.60" font-size="15.5" fill="#c3c9d3" text-anchor="middle" font-weight="normal" textLength="100.4" lengthAdjust="spacingAndGlyphs" stroke="#c3c9d3" stroke-width="0.3">OUTPUT GAIN</text>
<line x1="933.30" y1="710.40" x2="930.50" y2="715.25" stroke="#a2aab6" stroke-width="2.2"/>
<line x1="917.01" y1="687.13" x2="911.50" y2="688.11" stroke="#a2aab6" stroke-width="2.2"/>
<line x1="924.36" y1="659.70" x2="920.07" y2="656.10" stroke="#a2aab6" stroke-width="2.2"/>
<line x1="950.10" y1="647.70" x2="950.10" y2="642.10" stroke="#a2aab6" stroke-width="2.2"/>
<line x1="975.84" y1="659.70" x2="980.13" y2="656.10" stroke="#a2aab6" stroke-width="2.2"/>
<line x1="983.19" y1="687.13" x2="988.70" y2="688.11" stroke="#a2aab6" stroke-width="2.2"/>
<line x1="966.90" y1="710.40" x2="969.70" y2="715.25" stroke="#a2aab6" stroke-width="2.2"/>
<line x1="952.04" y1="663.41" x2="953.19" y2="652.87" stroke="#222222" stroke-width="2.2" stroke-linecap="round"/>
<text x="950.20" y="632.93" font-size="12" fill="#adb5c0" text-anchor="middle" font-weight="normal" stroke="#adb5c0" stroke-width="0.3">0</text>
<text x="916.90" y="731.43" font-size="12" fill="#adb5c0" text-anchor="middle" font-weight="normal" stroke="#adb5c0" stroke-width="0.3">-30</text>
<text x="979.90" y="731.43" font-size="12" fill="#adb5c0" text-anchor="middle" font-weight="normal" stroke="#adb5c0" stroke-width="0.3">30</text>
<text x="950.20" y="737.93" font-size="12" fill="#adb5c0" text-anchor="middle" font-weight="normal" stroke="#adb5c0" stroke-width="0.3">dB</text>
</svg>
</div></body></html>
